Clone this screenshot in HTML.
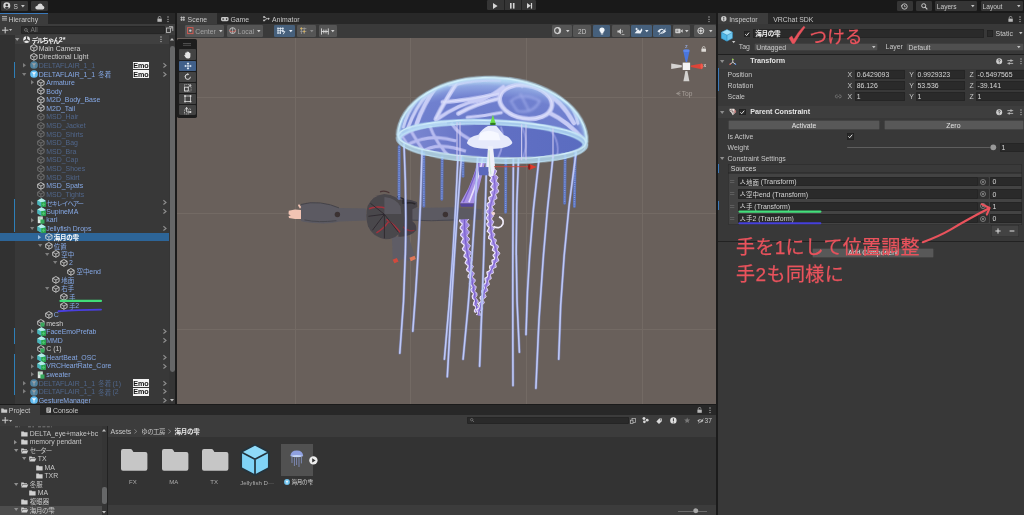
<!DOCTYPE html>
<html><head><meta charset="utf-8"><title>Unity</title>
<style>
html,body{margin:0;padding:0;background:#383838;}
body{width:1024px;height:515px;overflow:hidden;font-family:"Liberation Sans",sans-serif;}
#root{position:relative;width:1024px;height:515px;overflow:hidden;background:#383838;filter:blur(.38px);}
#root div,#root svg{position:absolute;}
#root svg{overflow:visible;}
#vp svg{overflow:hidden;}
.t{white-space:pre;line-height:9px;height:9px;letter-spacing:0;}
.cj{font-family:"Liberation Sans","Noto Sans CJK JP",sans-serif;}
</style></head><body><div id="root"><div style="left:0.00px;top:0.00px;width:1024.00px;height:13.40px;background:#191919;"></div><div style="left:1.20px;top:1.00px;width:26.80px;height:10.00px;background:#363636;border-radius:1.2px"></div><svg style="left:3.40px;top:2.20px;" width="7.60" height="7.60" viewBox="0 0 10 10"><circle cx="5" cy="5" r="4.6" fill="#d4d4d4"/><circle cx="5" cy="3.9" r="1.7" fill="#363636"/><path d="M1.9 8.2Q5 4.6 8.1 8.2Q5 10.4 1.9 8.2Z" fill="#363636"/></svg><div class="t" style="left:13.40px;top:1.60px;color:#c8c8c8;font-size:6.6px;font-weight:400;">S</div><svg style="left:21.40px;top:5.00px;" width="3.80" height="2.60" viewBox="0 0 3.8 2.6"><path d="M0 0H3.8L1.9 2.4Z" fill="#c4c4c4"/></svg><div style="left:31.00px;top:1.00px;width:16.60px;height:10.00px;background:#363636;border-radius:1.2px"></div><svg style="left:34.60px;top:2.80px;" width="9.60" height="6.60" viewBox="0 0 9.6 6.6"><path d="M2.4 6.4Q.2 6.4 .3 4.5Q.5 3 2.2 3Q2.8 .4 5.1 .4Q7.3 .4 7.8 2.7Q9.5 3 9.4 4.7Q9.3 6.4 7.6 6.4Z" fill="#d8d8d8"/></svg><div style="left:487.30px;top:0.00px;width:49.00px;height:10.40px;background:#353535;border-radius:1.2px"></div><div style="left:503.90px;top:0.00px;width:0.70px;height:10.40px;background:#222;"></div><div style="left:520.60px;top:0.00px;width:0.70px;height:10.40px;background:#222;"></div><svg style="left:493.30px;top:3.00px;" width="5.00" height="6.00" viewBox="0 0 5 6"><path d="M0 0L4.6 3L0 6Z" fill="#d6d6d6"/></svg><svg style="left:510.40px;top:3.10px;" width="5.00" height="6.00" viewBox="0 0 5 6"><rect x="0" y="0" width="1.6" height="5.6" fill="#d6d6d6"/><rect x="2.9" y="0" width="1.6" height="5.6" fill="#d6d6d6"/></svg><svg style="left:526.70px;top:3.10px;" width="6.00" height="6.00" viewBox="0 0 6 6"><path d="M0 0L3.8 2.8L0 5.6Z" fill="#d6d6d6"/><rect x="3.9" y="0" width="1.2" height="5.6" fill="#d6d6d6"/></svg><div style="left:896.70px;top:1.00px;width:16.20px;height:9.90px;background:#353535;border-radius:1.2px"></div><svg style="left:901.30px;top:2.50px;" width="7.00" height="7.00" viewBox="0 0 7 7"><circle cx="3.5" cy="3.5" r="2.7" fill="none" stroke="#c8c8c8" stroke-width="0.9"/><path d="M3.5 2V3.7H4.8" stroke="#c8c8c8" stroke-width="0.7" fill="none"/><path d="M0 2.2L1.6 2.6L0.5 3.7Z" fill="#c8c8c8"/></svg><div style="left:916.00px;top:1.00px;width:16.00px;height:9.90px;background:#353535;border-radius:1.2px"></div><svg style="left:920.80px;top:2.60px;" width="7.00" height="7.00" viewBox="0 0 7 7"><circle cx="2.7" cy="2.7" r="2" fill="none" stroke="#c8c8c8" stroke-width="1"/><path d="M4.2 4.2L6.3 6.3" stroke="#c8c8c8" stroke-width="1.2"/></svg><div style="left:935.00px;top:1.00px;width:42.00px;height:9.90px;background:#353535;border-radius:1.2px"></div><div class="t" style="left:936.80px;top:1.50px;color:#c8c8c8;font-size:6.6px;font-weight:400;">Layers</div><svg style="left:971.40px;top:5.00px;" width="3.60" height="2.40" viewBox="0 0 3.6 2.4"><path d="M0 0H3.6L1.8 2.3Z" fill="#c4c4c4"/></svg><div style="left:980.80px;top:1.00px;width:41.80px;height:9.90px;background:#353535;border-radius:1.2px"></div><div class="t" style="left:982.60px;top:1.50px;color:#c8c8c8;font-size:6.6px;font-weight:400;">Layout</div><svg style="left:1016.60px;top:5.00px;" width="3.60" height="2.40" viewBox="0 0 3.6 2.4"><path d="M0 0H3.6L1.8 2.3Z" fill="#c4c4c4"/></svg><div style="left:0.00px;top:13.40px;width:175.40px;height:10.60px;background:#282828;"></div><div style="left:176.60px;top:13.40px;width:539.60px;height:10.60px;background:#282828;"></div><div style="left:717.60px;top:13.40px;width:306.40px;height:10.60px;background:#282828;"></div><div style="left:175.40px;top:13.40px;width:1.20px;height:391.00px;background:#1b1b1b;"></div><div style="left:716.20px;top:13.40px;width:1.40px;height:501.60px;background:#1b1b1b;"></div><div style="left:0.00px;top:13.40px;width:47.60px;height:10.60px;background:#3c3c3c;"></div><div style="left:0.00px;top:13.40px;width:47.60px;height:0.90px;background:#3a79bb;"></div><svg style="left:1.60px;top:16.40px;" width="5.00" height="5.00" viewBox="0 0 5 5"><path d="M0 .6H5M0 2.3H5M0 4H5" stroke="#c8c8c8" stroke-width=".8"/></svg><div class="t" style="left:8.60px;top:14.50px;color:#c8c8c8;font-size:6.9px;font-weight:400;">Hierarchy</div><svg style="left:156.50px;top:15.80px;" width="5.40" height="6.20" viewBox="0 0 5.4 6.2"><rect x=".4" y="2.6" width="4.4" height="3.2" fill="#b8b8b8"/><path d="M1.3 2.6V1.6Q1.3 .5 2.6 .5Q3.9 .5 3.9 1.6" stroke="#b8b8b8" stroke-width=".8" fill="none"/></svg><svg style="left:166.60px;top:15.60px;" width="2.00" height="7.00" viewBox="0 0 2 7"><circle cx="1" cy="1" r=".65" fill="#bbb"/><circle cx="1" cy="3.3" r=".65" fill="#bbb"/><circle cx="1" cy="5.6" r=".65" fill="#bbb"/></svg><div style="left:0.00px;top:24.00px;width:175.40px;height:11.30px;background:#3c3c3c;"></div><svg style="left:1.60px;top:26.60px;" width="6.40" height="6.40" viewBox="0 0 6.4 6.4"><path d="M3.2 0V6.4M0 3.2H6.4" stroke="#d0d0d0" stroke-width="1"/></svg><svg style="left:8.80px;top:28.60px;" width="3.20" height="2.40" viewBox="0 0 3.2 2.4"><path d="M0 0H3.2L1.6 2.1Z" fill="#c0c0c0"/></svg><div style="left:20.50px;top:25.60px;width:144.50px;height:8.20px;background:#2a2a2a;border-radius:1.4px;box-shadow:inset 0 0 0 .5px #212121"></div><svg style="left:23.60px;top:27.50px;" width="5.00" height="5.00" viewBox="0 0 5 5"><circle cx="1.9" cy="1.9" r="1.4" fill="none" stroke="#8a8a8a" stroke-width=".7"/><path d="M3 3L4.4 4.4" stroke="#8a8a8a" stroke-width=".8"/></svg><div class="t" style="left:30.40px;top:25.20px;color:#7a7a7a;font-size:6.6px;font-weight:400;">All</div><svg style="left:165.60px;top:26.20px;" width="7.40" height="7.40" viewBox="0 0 7.4 7.4"><rect x=".6" y="2" width="4" height="4.6" fill="none" stroke="#c4c4c4" stroke-width=".8"/><path d="M3 .6H6.8V5" stroke="#c4c4c4" stroke-width=".8" fill="none"/><path d="M4.2 3.2L6.2 1.2M6.2 1.2H4.8M6.2 1.2V2.6" stroke="#c4c4c4" stroke-width=".6" fill="none"/></svg><div style="left:0.00px;top:35.30px;width:14.60px;height:368.60px;background:#313131;"></div><div style="left:14.60px;top:35.30px;width:154.40px;height:8.60px;background:#404040;"></div><div style="left:169.00px;top:35.30px;width:6.40px;height:368.60px;background:#353535;"></div><div style="left:169.60px;top:45.50px;width:5.20px;height:326.00px;background:#666768;border-radius:2.4px"></div><svg style="left:170.30px;top:38.40px;" width="4.00" height="3.00" viewBox="0 0 4 3"><path d="M0 2.6L2 0L4 2.6Z" fill="#c0c0c0"/></svg><svg style="left:170.30px;top:398.60px;" width="4.00" height="3.00" viewBox="0 0 4 3"><path d="M0 0L2 2.6L4 0Z" fill="#c0c0c0"/></svg><svg style="left:15.00px;top:38.17px;" width="4.40" height="3.20" viewBox="0 0 4.4 3.2"><path d="M0 0H4.4L2.2 3Z" fill="#9a9a9a"/></svg><svg style="left:22.80px;top:36.07px;" width="7.20" height="7.20" viewBox="0 0 10 10"><circle cx="5" cy="5" r="4.7" fill="#e8e8e8"/><path d="M5 5L5 .2M5 5L.9 7.4M5 5L9.1 7.4" stroke="#404040" stroke-width="1.7"/><circle cx="5" cy="5" r="1.3" fill="#404040"/></svg><div class="t cj" style="left:31.40px;top:35.53px;color:#f0f0f0;font-size:6.7px;font-weight:700;letter-spacing:-1.2px;">デルちゃん</div><div class="t" style="left:58.87px;top:35.17px;color:#f0f0f0;font-size:7.0px;font-weight:700;">2*</div><svg style="left:160.40px;top:36.40px;" width="2.00" height="7.00" viewBox="0 0 2 7"><circle cx="1" cy="1" r=".65" fill="#c4c4c4"/><circle cx="1" cy="3.3" r=".65" fill="#c4c4c4"/><circle cx="1" cy="5.6" r=".65" fill="#c4c4c4"/></svg><div style="left:0.00px;top:232.86px;width:168.60px;height:8.59px;background:#2d6598;"></div><svg style="left:29.60px;top:44.36px;" width="7.80" height="7.80" viewBox="0 0 10 10"><g fill="none" stroke="#dcdcdc" stroke-width="1.05" stroke-linejoin="round" opacity="1"><path d="M5 .7L9.1 2.9V7.1L5 9.3L.9 7.1V2.9Z"/><path d="M.9 2.9L5 5.1L9.1 2.9M5 5.1V9.3" stroke-width=".95"/></g></svg><div class="t" style="left:38.70px;top:43.76px;color:#d0d0d0;font-size:6.95px;font-weight:400;">Main Camera</div><svg style="left:29.60px;top:52.94px;" width="7.80" height="7.80" viewBox="0 0 10 10"><g fill="none" stroke="#dcdcdc" stroke-width="1.05" stroke-linejoin="round" opacity="1"><path d="M5 .7L9.1 2.9V7.1L5 9.3L.9 7.1V2.9Z"/><path d="M.9 2.9L5 5.1L9.1 2.9M5 5.1V9.3" stroke-width=".95"/></g></svg><div class="t" style="left:38.70px;top:52.34px;color:#d0d0d0;font-size:6.95px;font-weight:400;">Directional Light</div><svg style="left:23.20px;top:63.13px;" width="3.20" height="4.60" viewBox="0 0 3.2 4.6"><path d="M0 0L3 2.3L0 4.6Z" fill="#7e7e7e"/></svg><svg style="left:29.60px;top:61.43px;" width="8.00" height="8.00" viewBox="0 0 10 10"><g opacity="0.55"><circle cx="5" cy="5" r="4.8" fill="#62bdf2"/><path d="M2.3 2.8H7.7L5.6 5.6V8.2H4.4V5.6Z" fill="#eef8ff"/></g></svg><div class="t" style="left:38.70px;top:60.93px;color:#50668a;font-size:6.95px;font-weight:400;">DELTAFLAIR_1_1</div><div style="left:132.60px;top:61.73px;width:16.00px;height:7.50px;background:#f4f4f4;"></div><div class="t" style="left:133.20px;top:61.03px;color:#111;font-size:7.2px;font-weight:700;">Emo</div><svg style="left:162.60px;top:63.03px;" width="3.40" height="4.80" viewBox="0 0 3.4 4.8"><path d="M.4 .3L3 2.4L.4 4.5" fill="none" stroke="#8e8e8e" stroke-width="1.15"/></svg><svg style="left:22.40px;top:72.51px;" width="4.40" height="3.20" viewBox="0 0 4.4 3.2"><path d="M0 0H4.4L2.2 3Z" fill="#7e7e7e"/></svg><svg style="left:29.60px;top:70.01px;" width="8.00" height="8.00" viewBox="0 0 10 10"><g opacity="1"><circle cx="5" cy="5" r="4.8" fill="#62bdf2"/><path d="M2.3 2.8H7.7L5.6 5.6V8.2H4.4V5.6Z" fill="#eef8ff"/></g></svg><div class="t" style="left:38.70px;top:69.51px;color:#86a9e6;font-size:6.95px;font-weight:400;">DELTAFLAIR_1_1 </div><div class="t cj" style="left:98.19px;top:69.82px;color:#86a9e6;font-size:6.45px;font-weight:400;">冬着</div><div style="left:132.60px;top:70.31px;width:16.00px;height:7.50px;background:#f4f4f4;"></div><div class="t" style="left:133.20px;top:69.61px;color:#111;font-size:7.2px;font-weight:700;">Emo</div><svg style="left:162.60px;top:71.61px;" width="3.40" height="4.80" viewBox="0 0 3.4 4.8"><path d="M.4 .3L3 2.4L.4 4.5" fill="none" stroke="#8e8e8e" stroke-width="1.15"/></svg><svg style="left:30.75px;top:80.30px;" width="3.20" height="4.60" viewBox="0 0 3.2 4.6"><path d="M0 0L3 2.3L0 4.6Z" fill="#7e7e7e"/></svg><svg style="left:37.15px;top:78.70px;" width="7.80" height="7.80" viewBox="0 0 10 10"><g fill="none" stroke="#dcdcdc" stroke-width="1.05" stroke-linejoin="round" opacity="1"><path d="M5 .7L9.1 2.9V7.1L5 9.3L.9 7.1V2.9Z"/><path d="M.9 2.9L5 5.1L9.1 2.9M5 5.1V9.3" stroke-width=".95"/></g></svg><div class="t" style="left:46.25px;top:78.10px;color:#86a9e6;font-size:6.95px;font-weight:400;">Armature</div><svg style="left:37.15px;top:87.29px;" width="7.80" height="7.80" viewBox="0 0 10 10"><g fill="none" stroke="#dcdcdc" stroke-width="1.05" stroke-linejoin="round" opacity="1"><path d="M5 .7L9.1 2.9V7.1L5 9.3L.9 7.1V2.9Z"/><path d="M.9 2.9L5 5.1L9.1 2.9M5 5.1V9.3" stroke-width=".95"/></g></svg><div class="t" style="left:46.25px;top:86.69px;color:#86a9e6;font-size:6.95px;font-weight:400;">Body</div><svg style="left:37.15px;top:95.87px;" width="7.80" height="7.80" viewBox="0 0 10 10"><g fill="none" stroke="#dcdcdc" stroke-width="1.05" stroke-linejoin="round" opacity="1"><path d="M5 .7L9.1 2.9V7.1L5 9.3L.9 7.1V2.9Z"/><path d="M.9 2.9L5 5.1L9.1 2.9M5 5.1V9.3" stroke-width=".95"/></g></svg><div class="t" style="left:46.25px;top:95.27px;color:#86a9e6;font-size:6.95px;font-weight:400;">M2D_Body_Base</div><svg style="left:37.15px;top:104.46px;" width="7.80" height="7.80" viewBox="0 0 10 10"><g fill="none" stroke="#dcdcdc" stroke-width="1.05" stroke-linejoin="round" opacity="1"><path d="M5 .7L9.1 2.9V7.1L5 9.3L.9 7.1V2.9Z"/><path d="M.9 2.9L5 5.1L9.1 2.9M5 5.1V9.3" stroke-width=".95"/></g></svg><div class="t" style="left:46.25px;top:103.86px;color:#86a9e6;font-size:6.95px;font-weight:400;">M2D_Tail</div><svg style="left:37.15px;top:113.04px;" width="7.80" height="7.80" viewBox="0 0 10 10"><g fill="none" stroke="#8a8a8a" stroke-width="1.05" stroke-linejoin="round" opacity="0.8"><path d="M5 .7L9.1 2.9V7.1L5 9.3L.9 7.1V2.9Z"/><path d="M.9 2.9L5 5.1L9.1 2.9M5 5.1V9.3" stroke-width=".95"/></g></svg><div class="t" style="left:46.25px;top:112.44px;color:#50668a;font-size:6.95px;font-weight:400;">MSD_Hair</div><svg style="left:37.15px;top:121.63px;" width="7.80" height="7.80" viewBox="0 0 10 10"><g fill="none" stroke="#8a8a8a" stroke-width="1.05" stroke-linejoin="round" opacity="0.8"><path d="M5 .7L9.1 2.9V7.1L5 9.3L.9 7.1V2.9Z"/><path d="M.9 2.9L5 5.1L9.1 2.9M5 5.1V9.3" stroke-width=".95"/></g></svg><div class="t" style="left:46.25px;top:121.03px;color:#50668a;font-size:6.95px;font-weight:400;">MSD_Jacket</div><svg style="left:37.15px;top:130.22px;" width="7.80" height="7.80" viewBox="0 0 10 10"><g fill="none" stroke="#8a8a8a" stroke-width="1.05" stroke-linejoin="round" opacity="0.8"><path d="M5 .7L9.1 2.9V7.1L5 9.3L.9 7.1V2.9Z"/><path d="M.9 2.9L5 5.1L9.1 2.9M5 5.1V9.3" stroke-width=".95"/></g></svg><div class="t" style="left:46.25px;top:129.62px;color:#50668a;font-size:6.95px;font-weight:400;">MSD_Shirts</div><svg style="left:37.15px;top:138.80px;" width="7.80" height="7.80" viewBox="0 0 10 10"><g fill="none" stroke="#8a8a8a" stroke-width="1.05" stroke-linejoin="round" opacity="0.8"><path d="M5 .7L9.1 2.9V7.1L5 9.3L.9 7.1V2.9Z"/><path d="M.9 2.9L5 5.1L9.1 2.9M5 5.1V9.3" stroke-width=".95"/></g></svg><div class="t" style="left:46.25px;top:138.20px;color:#50668a;font-size:6.95px;font-weight:400;">MSD_Bag</div><svg style="left:37.15px;top:147.39px;" width="7.80" height="7.80" viewBox="0 0 10 10"><g fill="none" stroke="#8a8a8a" stroke-width="1.05" stroke-linejoin="round" opacity="0.8"><path d="M5 .7L9.1 2.9V7.1L5 9.3L.9 7.1V2.9Z"/><path d="M.9 2.9L5 5.1L9.1 2.9M5 5.1V9.3" stroke-width=".95"/></g></svg><div class="t" style="left:46.25px;top:146.79px;color:#50668a;font-size:6.95px;font-weight:400;">MSD_Bra</div><svg style="left:37.15px;top:155.97px;" width="7.80" height="7.80" viewBox="0 0 10 10"><g fill="none" stroke="#8a8a8a" stroke-width="1.05" stroke-linejoin="round" opacity="0.8"><path d="M5 .7L9.1 2.9V7.1L5 9.3L.9 7.1V2.9Z"/><path d="M.9 2.9L5 5.1L9.1 2.9M5 5.1V9.3" stroke-width=".95"/></g></svg><div class="t" style="left:46.25px;top:155.37px;color:#50668a;font-size:6.95px;font-weight:400;">MSD_Cap</div><svg style="left:37.15px;top:164.56px;" width="7.80" height="7.80" viewBox="0 0 10 10"><g fill="none" stroke="#8a8a8a" stroke-width="1.05" stroke-linejoin="round" opacity="0.8"><path d="M5 .7L9.1 2.9V7.1L5 9.3L.9 7.1V2.9Z"/><path d="M.9 2.9L5 5.1L9.1 2.9M5 5.1V9.3" stroke-width=".95"/></g></svg><div class="t" style="left:46.25px;top:163.96px;color:#50668a;font-size:6.95px;font-weight:400;">MSD_Shoes</div><svg style="left:37.15px;top:173.15px;" width="7.80" height="7.80" viewBox="0 0 10 10"><g fill="none" stroke="#8a8a8a" stroke-width="1.05" stroke-linejoin="round" opacity="0.8"><path d="M5 .7L9.1 2.9V7.1L5 9.3L.9 7.1V2.9Z"/><path d="M.9 2.9L5 5.1L9.1 2.9M5 5.1V9.3" stroke-width=".95"/></g></svg><div class="t" style="left:46.25px;top:172.55px;color:#50668a;font-size:6.95px;font-weight:400;">MSD_Skirt</div><svg style="left:37.15px;top:181.73px;" width="7.80" height="7.80" viewBox="0 0 10 10"><g fill="none" stroke="#dcdcdc" stroke-width="1.05" stroke-linejoin="round" opacity="1"><path d="M5 .7L9.1 2.9V7.1L5 9.3L.9 7.1V2.9Z"/><path d="M.9 2.9L5 5.1L9.1 2.9M5 5.1V9.3" stroke-width=".95"/></g></svg><div class="t" style="left:46.25px;top:181.13px;color:#86a9e6;font-size:6.95px;font-weight:400;">MSD_Spats</div><svg style="left:37.15px;top:190.32px;" width="7.80" height="7.80" viewBox="0 0 10 10"><g fill="none" stroke="#8a8a8a" stroke-width="1.05" stroke-linejoin="round" opacity="0.8"><path d="M5 .7L9.1 2.9V7.1L5 9.3L.9 7.1V2.9Z"/><path d="M.9 2.9L5 5.1L9.1 2.9M5 5.1V9.3" stroke-width=".95"/></g></svg><div class="t" style="left:46.25px;top:189.72px;color:#50668a;font-size:6.95px;font-weight:400;">MSD_Tights</div><svg style="left:30.75px;top:200.50px;" width="3.20" height="4.60" viewBox="0 0 3.2 4.6"><path d="M0 0L3 2.3L0 4.6Z" fill="#7e7e7e"/></svg><svg style="left:36.55px;top:198.30px;" width="9.00" height="9.00" viewBox="0 0 10 10"><g opacity="1"><path d="M5 .4L9.5 2.8V7.2L5 9.6L.5 7.2V2.8Z" fill="#58c4c0"/><path d="M5 .4L9.5 2.8L5 5.2L.5 2.8Z" fill="#b4ece6"/><path d="M.5 2.8L5 5.2V9.6L.5 7.2Z" fill="#49b4bc"/><path d="M4.7 4.4H9.9V9.9H4.7Z" fill="#2ba650"/><path d="M7.3 5.4V8.9M5.6 7.15H9" stroke="#57c878" stroke-width=".9"/></g></svg><div class="t cj" style="left:46.25px;top:198.61px;color:#86a9e6;font-size:6.45px;font-weight:400;letter-spacing:-1.15px;">セキレイヘアー</div><svg style="left:162.60px;top:200.40px;" width="3.40" height="4.80" viewBox="0 0 3.4 4.8"><path d="M.4 .3L3 2.4L.4 4.5" fill="none" stroke="#8e8e8e" stroke-width="1.15"/></svg><svg style="left:30.75px;top:209.09px;" width="3.20" height="4.60" viewBox="0 0 3.2 4.6"><path d="M0 0L3 2.3L0 4.6Z" fill="#7e7e7e"/></svg><svg style="left:36.55px;top:206.89px;" width="9.00" height="9.00" viewBox="0 0 10 10"><g opacity="1"><path d="M5 .4L9.5 2.8V7.2L5 9.6L.5 7.2V2.8Z" fill="#58c4c0"/><path d="M5 .4L9.5 2.8L5 5.2L.5 2.8Z" fill="#b4ece6"/><path d="M.5 2.8L5 5.2V9.6L.5 7.2Z" fill="#49b4bc"/><path d="M4.7 4.4H9.9V9.9H4.7Z" fill="#2ba650"/><path d="M7.3 5.4V8.9M5.6 7.15H9" stroke="#57c878" stroke-width=".9"/></g></svg><div class="t" style="left:46.25px;top:206.89px;color:#86a9e6;font-size:6.95px;font-weight:400;">SupineMA</div><svg style="left:162.60px;top:208.99px;" width="3.40" height="4.80" viewBox="0 0 3.4 4.8"><path d="M.4 .3L3 2.4L.4 4.5" fill="none" stroke="#8e8e8e" stroke-width="1.15"/></svg><svg style="left:30.75px;top:217.68px;" width="3.20" height="4.60" viewBox="0 0 3.2 4.6"><path d="M0 0L3 2.3L0 4.6Z" fill="#7e7e7e"/></svg><svg style="left:37.15px;top:216.08px;" width="7.80" height="7.80" viewBox="0 0 10 10"><rect x="1" y=".6" width="6.4" height="8.6" fill="#dfe9e4"/><path d="M4.4 4.4H9.6V9.8H4.4Z" fill="#36a95c"/><path d="M2 2.4H6M2 4H4" stroke="#6b8" stroke-width=".8"/></svg><div class="t" style="left:46.25px;top:215.48px;color:#86a9e6;font-size:6.95px;font-weight:400;">kari</div><svg style="left:29.95px;top:227.06px;" width="4.40" height="3.20" viewBox="0 0 4.4 3.2"><path d="M0 0H4.4L2.2 3Z" fill="#7e7e7e"/></svg><svg style="left:36.55px;top:224.06px;" width="9.00" height="9.00" viewBox="0 0 10 10"><g opacity="1"><path d="M5 .4L9.5 2.8V7.2L5 9.6L.5 7.2V2.8Z" fill="#58c4c0"/><path d="M5 .4L9.5 2.8L5 5.2L.5 2.8Z" fill="#b4ece6"/><path d="M.5 2.8L5 5.2V9.6L.5 7.2Z" fill="#49b4bc"/><path d="M4.7 4.4H9.9V9.9H4.7Z" fill="#2ba650"/><path d="M7.3 5.4V8.9M5.6 7.15H9" stroke="#57c878" stroke-width=".9"/></g></svg><div class="t" style="left:46.25px;top:224.06px;color:#86a9e6;font-size:6.95px;font-weight:400;">Jellyfish Drops</div><svg style="left:162.60px;top:226.16px;" width="3.40" height="4.80" viewBox="0 0 3.4 4.8"><path d="M.4 .3L3 2.4L.4 4.5" fill="none" stroke="#8e8e8e" stroke-width="1.15"/></svg><svg style="left:38.30px;top:234.85px;" width="3.20" height="4.60" viewBox="0 0 3.2 4.6"><path d="M0 0L3 2.3L0 4.6Z" fill="#9fc0e0"/></svg><svg style="left:44.70px;top:233.25px;" width="7.80" height="7.80" viewBox="0 0 10 10"><g fill="none" stroke="#dcdcdc" stroke-width="1.05" stroke-linejoin="round" opacity="1"><path d="M5 .7L9.1 2.9V7.1L5 9.3L.9 7.1V2.9Z"/><path d="M.9 2.9L5 5.1L9.1 2.9M5 5.1V9.3" stroke-width=".95"/></g></svg><div class="t cj" style="left:53.80px;top:233.00px;color:#ffffff;font-size:6.5px;font-weight:700;letter-spacing:-0.3px;">海月の雫</div><svg style="left:37.50px;top:244.23px;" width="4.40" height="3.20" viewBox="0 0 4.4 3.2"><path d="M0 0H4.4L2.2 3Z" fill="#7e7e7e"/></svg><svg style="left:44.70px;top:241.83px;" width="7.80" height="7.80" viewBox="0 0 10 10"><g fill="none" stroke="#dcdcdc" stroke-width="1.05" stroke-linejoin="round" opacity="1"><path d="M5 .7L9.1 2.9V7.1L5 9.3L.9 7.1V2.9Z"/><path d="M.9 2.9L5 5.1L9.1 2.9M5 5.1V9.3" stroke-width=".95"/></g></svg><div class="t cj" style="left:53.80px;top:241.54px;color:#86a9e6;font-size:6.45px;font-weight:400;">位置</div><svg style="left:45.05px;top:252.82px;" width="4.40" height="3.20" viewBox="0 0 4.4 3.2"><path d="M0 0H4.4L2.2 3Z" fill="#7e7e7e"/></svg><svg style="left:52.25px;top:250.42px;" width="7.80" height="7.80" viewBox="0 0 10 10"><g fill="none" stroke="#dcdcdc" stroke-width="1.05" stroke-linejoin="round" opacity="1"><path d="M5 .7L9.1 2.9V7.1L5 9.3L.9 7.1V2.9Z"/><path d="M.9 2.9L5 5.1L9.1 2.9M5 5.1V9.3" stroke-width=".95"/></g></svg><div class="t cj" style="left:61.35px;top:250.13px;color:#86a9e6;font-size:6.45px;font-weight:400;">空中</div><svg style="left:52.60px;top:261.41px;" width="4.40" height="3.20" viewBox="0 0 4.4 3.2"><path d="M0 0H4.4L2.2 3Z" fill="#7e7e7e"/></svg><svg style="left:59.80px;top:259.01px;" width="7.80" height="7.80" viewBox="0 0 10 10"><g fill="none" stroke="#dcdcdc" stroke-width="1.05" stroke-linejoin="round" opacity="1"><path d="M5 .7L9.1 2.9V7.1L5 9.3L.9 7.1V2.9Z"/><path d="M.9 2.9L5 5.1L9.1 2.9M5 5.1V9.3" stroke-width=".95"/></g></svg><div class="t" style="left:68.90px;top:258.41px;color:#86a9e6;font-size:6.95px;font-weight:400;">2</div><svg style="left:67.35px;top:267.59px;" width="7.80" height="7.80" viewBox="0 0 10 10"><g fill="none" stroke="#dcdcdc" stroke-width="1.05" stroke-linejoin="round" opacity="1"><path d="M5 .7L9.1 2.9V7.1L5 9.3L.9 7.1V2.9Z"/><path d="M.9 2.9L5 5.1L9.1 2.9M5 5.1V9.3" stroke-width=".95"/></g></svg><div class="t cj" style="left:76.45px;top:267.30px;color:#86a9e6;font-size:6.45px;font-weight:400;">空中</div><div class="t" style="left:89.35px;top:266.99px;color:#86a9e6;font-size:6.95px;font-weight:400;">end</div><svg style="left:52.25px;top:276.18px;" width="7.80" height="7.80" viewBox="0 0 10 10"><g fill="none" stroke="#dcdcdc" stroke-width="1.05" stroke-linejoin="round" opacity="1"><path d="M5 .7L9.1 2.9V7.1L5 9.3L.9 7.1V2.9Z"/><path d="M.9 2.9L5 5.1L9.1 2.9M5 5.1V9.3" stroke-width=".95"/></g></svg><div class="t cj" style="left:61.35px;top:275.89px;color:#86a9e6;font-size:6.45px;font-weight:400;">地面</div><svg style="left:45.05px;top:287.16px;" width="4.40" height="3.20" viewBox="0 0 4.4 3.2"><path d="M0 0H4.4L2.2 3Z" fill="#7e7e7e"/></svg><svg style="left:52.25px;top:284.76px;" width="7.80" height="7.80" viewBox="0 0 10 10"><g fill="none" stroke="#dcdcdc" stroke-width="1.05" stroke-linejoin="round" opacity="1"><path d="M5 .7L9.1 2.9V7.1L5 9.3L.9 7.1V2.9Z"/><path d="M.9 2.9L5 5.1L9.1 2.9M5 5.1V9.3" stroke-width=".95"/></g></svg><div class="t cj" style="left:61.35px;top:284.47px;color:#86a9e6;font-size:6.45px;font-weight:400;">右手</div><svg style="left:59.80px;top:293.35px;" width="7.80" height="7.80" viewBox="0 0 10 10"><g fill="none" stroke="#dcdcdc" stroke-width="1.05" stroke-linejoin="round" opacity="1"><path d="M5 .7L9.1 2.9V7.1L5 9.3L.9 7.1V2.9Z"/><path d="M.9 2.9L5 5.1L9.1 2.9M5 5.1V9.3" stroke-width=".95"/></g></svg><div class="t cj" style="left:68.90px;top:293.06px;color:#86a9e6;font-size:6.45px;font-weight:400;">手</div><svg style="left:59.80px;top:301.94px;" width="7.80" height="7.80" viewBox="0 0 10 10"><g fill="none" stroke="#dcdcdc" stroke-width="1.05" stroke-linejoin="round" opacity="1"><path d="M5 .7L9.1 2.9V7.1L5 9.3L.9 7.1V2.9Z"/><path d="M.9 2.9L5 5.1L9.1 2.9M5 5.1V9.3" stroke-width=".95"/></g></svg><div class="t cj" style="left:68.90px;top:301.64px;color:#86a9e6;font-size:6.45px;font-weight:400;">手</div><div class="t" style="left:75.35px;top:301.34px;color:#86a9e6;font-size:6.95px;font-weight:400;">2</div><svg style="left:44.70px;top:310.52px;" width="7.80" height="7.80" viewBox="0 0 10 10"><g fill="none" stroke="#dcdcdc" stroke-width="1.05" stroke-linejoin="round" opacity="1"><path d="M5 .7L9.1 2.9V7.1L5 9.3L.9 7.1V2.9Z"/><path d="M.9 2.9L5 5.1L9.1 2.9M5 5.1V9.3" stroke-width=".95"/></g></svg><div class="t" style="left:53.80px;top:309.92px;color:#86a9e6;font-size:6.95px;font-weight:400;">C</div><svg style="left:37.15px;top:319.11px;" width="7.80" height="7.80" viewBox="0 0 10 10"><g fill="none" stroke="#d6d6d6" stroke-width="1.05" stroke-linejoin="round"><path d="M5 .7L9.1 2.9V7.1L5 9.3L.9 7.1V2.9Z"/><path d="M.9 2.9L5 5.1L9.1 2.9M5 5.1V9.3" stroke-width=".95"/></g><path d="M4.6 4.6H9.6V9.8H4.6Z" fill="#36a95c"/></svg><div class="t" style="left:46.25px;top:318.51px;color:#d0d0d0;font-size:6.95px;font-weight:400;">mesh</div><svg style="left:30.75px;top:329.29px;" width="3.20" height="4.60" viewBox="0 0 3.2 4.6"><path d="M0 0L3 2.3L0 4.6Z" fill="#7e7e7e"/></svg><svg style="left:36.55px;top:327.09px;" width="9.00" height="9.00" viewBox="0 0 10 10"><g opacity="1"><path d="M5 .4L9.5 2.8V7.2L5 9.6L.5 7.2V2.8Z" fill="#58c4c0"/><path d="M5 .4L9.5 2.8L5 5.2L.5 2.8Z" fill="#b4ece6"/><path d="M.5 2.8L5 5.2V9.6L.5 7.2Z" fill="#49b4bc"/><path d="M4.7 4.4H9.9V9.9H4.7Z" fill="#2ba650"/><path d="M7.3 5.4V8.9M5.6 7.15H9" stroke="#57c878" stroke-width=".9"/></g></svg><div class="t" style="left:46.25px;top:327.09px;color:#86a9e6;font-size:6.95px;font-weight:400;">FaceEmoPrefab</div><svg style="left:162.60px;top:329.19px;" width="3.40" height="4.80" viewBox="0 0 3.4 4.8"><path d="M.4 .3L3 2.4L.4 4.5" fill="none" stroke="#8e8e8e" stroke-width="1.15"/></svg><svg style="left:36.55px;top:335.68px;" width="9.00" height="9.00" viewBox="0 0 10 10"><g opacity="1"><path d="M5 .4L9.5 2.8V7.2L5 9.6L.5 7.2V2.8Z" fill="#58c4c0"/><path d="M5 .4L9.5 2.8L5 5.2L.5 2.8Z" fill="#b4ece6"/><path d="M.5 2.8L5 5.2V9.6L.5 7.2Z" fill="#49b4bc"/><path d="M4.7 4.4H9.9V9.9H4.7Z" fill="#2ba650"/><path d="M7.3 5.4V8.9M5.6 7.15H9" stroke="#57c878" stroke-width=".9"/></g></svg><div class="t" style="left:46.25px;top:335.68px;color:#86a9e6;font-size:6.95px;font-weight:400;">MMD</div><svg style="left:162.60px;top:337.78px;" width="3.40" height="4.80" viewBox="0 0 3.4 4.8"><path d="M.4 .3L3 2.4L.4 4.5" fill="none" stroke="#8e8e8e" stroke-width="1.15"/></svg><svg style="left:37.15px;top:344.87px;" width="7.80" height="7.80" viewBox="0 0 10 10"><g fill="none" stroke="#d6d6d6" stroke-width="1.05" stroke-linejoin="round"><path d="M5 .7L9.1 2.9V7.1L5 9.3L.9 7.1V2.9Z"/><path d="M.9 2.9L5 5.1L9.1 2.9M5 5.1V9.3" stroke-width=".95"/></g><path d="M4.6 4.6H9.6V9.8H4.6Z" fill="#36a95c"/></svg><div class="t" style="left:46.25px;top:344.27px;color:#d0d0d0;font-size:6.95px;font-weight:400;">C (1)</div><svg style="left:30.75px;top:355.05px;" width="3.20" height="4.60" viewBox="0 0 3.2 4.6"><path d="M0 0L3 2.3L0 4.6Z" fill="#7e7e7e"/></svg><svg style="left:36.55px;top:352.85px;" width="9.00" height="9.00" viewBox="0 0 10 10"><g opacity="1"><path d="M5 .4L9.5 2.8V7.2L5 9.6L.5 7.2V2.8Z" fill="#58c4c0"/><path d="M5 .4L9.5 2.8L5 5.2L.5 2.8Z" fill="#b4ece6"/><path d="M.5 2.8L5 5.2V9.6L.5 7.2Z" fill="#49b4bc"/><path d="M4.7 4.4H9.9V9.9H4.7Z" fill="#2ba650"/><path d="M7.3 5.4V8.9M5.6 7.15H9" stroke="#57c878" stroke-width=".9"/></g></svg><div class="t" style="left:46.25px;top:352.85px;color:#86a9e6;font-size:6.95px;font-weight:400;">HeartBeat_OSC</div><svg style="left:162.60px;top:354.95px;" width="3.40" height="4.80" viewBox="0 0 3.4 4.8"><path d="M.4 .3L3 2.4L.4 4.5" fill="none" stroke="#8e8e8e" stroke-width="1.15"/></svg><svg style="left:30.75px;top:363.64px;" width="3.20" height="4.60" viewBox="0 0 3.2 4.6"><path d="M0 0L3 2.3L0 4.6Z" fill="#7e7e7e"/></svg><svg style="left:36.55px;top:361.44px;" width="9.00" height="9.00" viewBox="0 0 10 10"><g opacity="1"><path d="M5 .4L9.5 2.8V7.2L5 9.6L.5 7.2V2.8Z" fill="#58c4c0"/><path d="M5 .4L9.5 2.8L5 5.2L.5 2.8Z" fill="#b4ece6"/><path d="M.5 2.8L5 5.2V9.6L.5 7.2Z" fill="#49b4bc"/><path d="M4.7 4.4H9.9V9.9H4.7Z" fill="#2ba650"/><path d="M7.3 5.4V8.9M5.6 7.15H9" stroke="#57c878" stroke-width=".9"/></g></svg><div class="t" style="left:46.25px;top:361.44px;color:#86a9e6;font-size:6.95px;font-weight:400;">VRCHeartRate_Core</div><svg style="left:162.60px;top:363.54px;" width="3.40" height="4.80" viewBox="0 0 3.4 4.8"><path d="M.4 .3L3 2.4L.4 4.5" fill="none" stroke="#8e8e8e" stroke-width="1.15"/></svg><svg style="left:30.75px;top:372.22px;" width="3.20" height="4.60" viewBox="0 0 3.2 4.6"><path d="M0 0L3 2.3L0 4.6Z" fill="#7e7e7e"/></svg><svg style="left:37.15px;top:370.62px;" width="7.80" height="7.80" viewBox="0 0 10 10"><rect x="1" y=".6" width="6.4" height="8.6" fill="#dfe9e4"/><path d="M4.4 4.4H9.6V9.8H4.4Z" fill="#36a95c"/><path d="M2 2.4H6M2 4H4" stroke="#6b8" stroke-width=".8"/></svg><div class="t" style="left:46.25px;top:370.02px;color:#86a9e6;font-size:6.95px;font-weight:400;">sweater</div><svg style="left:23.20px;top:380.81px;" width="3.20" height="4.60" viewBox="0 0 3.2 4.6"><path d="M0 0L3 2.3L0 4.6Z" fill="#7e7e7e"/></svg><svg style="left:29.60px;top:379.11px;" width="8.00" height="8.00" viewBox="0 0 10 10"><g opacity="0.55"><circle cx="5" cy="5" r="4.8" fill="#62bdf2"/><path d="M2.3 2.8H7.7L5.6 5.6V8.2H4.4V5.6Z" fill="#eef8ff"/></g></svg><div class="t" style="left:38.70px;top:378.61px;color:#50668a;font-size:6.95px;font-weight:400;">DELTAFLAIR_1_1 </div><div class="t cj" style="left:98.19px;top:378.92px;color:#50668a;font-size:6.45px;font-weight:400;">冬着</div><div class="t" style="left:112.53px;top:378.61px;color:#50668a;font-size:6.95px;font-weight:400;">(1)</div><div style="left:132.60px;top:379.41px;width:16.00px;height:7.50px;background:#f4f4f4;"></div><div class="t" style="left:133.20px;top:378.71px;color:#111;font-size:7.2px;font-weight:700;">Emo</div><svg style="left:162.60px;top:380.71px;" width="3.40" height="4.80" viewBox="0 0 3.4 4.8"><path d="M.4 .3L3 2.4L.4 4.5" fill="none" stroke="#8e8e8e" stroke-width="1.15"/></svg><svg style="left:23.20px;top:389.40px;" width="3.20" height="4.60" viewBox="0 0 3.2 4.6"><path d="M0 0L3 2.3L0 4.6Z" fill="#7e7e7e"/></svg><svg style="left:29.60px;top:387.70px;" width="8.00" height="8.00" viewBox="0 0 10 10"><g opacity="0.55"><circle cx="5" cy="5" r="4.8" fill="#62bdf2"/><path d="M2.3 2.8H7.7L5.6 5.6V8.2H4.4V5.6Z" fill="#eef8ff"/></g></svg><div class="t" style="left:38.70px;top:387.20px;color:#50668a;font-size:6.95px;font-weight:400;">DELTAFLAIR_1_1 </div><div class="t cj" style="left:98.19px;top:387.50px;color:#50668a;font-size:6.45px;font-weight:400;">冬着</div><div class="t" style="left:112.53px;top:387.20px;color:#50668a;font-size:6.95px;font-weight:400;">(2</div><div style="left:132.60px;top:388.00px;width:16.00px;height:7.50px;background:#f4f4f4;"></div><div class="t" style="left:133.20px;top:387.30px;color:#111;font-size:7.2px;font-weight:700;">Emo</div><svg style="left:162.60px;top:389.30px;" width="3.40" height="4.80" viewBox="0 0 3.4 4.8"><path d="M.4 .3L3 2.4L.4 4.5" fill="none" stroke="#8e8e8e" stroke-width="1.15"/></svg><svg style="left:29.60px;top:396.28px;" width="8.00" height="8.00" viewBox="0 0 10 10"><g opacity="1"><circle cx="5" cy="5" r="4.8" fill="#62bdf2"/><path d="M2.3 2.8H7.7L5.6 5.6V8.2H4.4V5.6Z" fill="#eef8ff"/></g></svg><div class="t" style="left:38.70px;top:395.78px;color:#86a9e6;font-size:6.95px;font-weight:400;">GestureManager</div><svg style="left:162.60px;top:397.88px;" width="3.40" height="4.80" viewBox="0 0 3.4 4.8"><path d="M.4 .3L3 2.4L.4 4.5" fill="none" stroke="#8e8e8e" stroke-width="1.15"/></svg><svg style="left:58.00px;top:297.00px;" width="46.00" height="16.00" viewBox="0 0 46 16"><path d="M2.4 3.9H43" stroke="#41dd78" stroke-width="2.1" stroke-linecap="round"/><path d="M.6 14.3Q20 12.6 43 12.6" stroke="#4a3fe0" stroke-width="1.9" stroke-linecap="round" fill="none"/></svg><div style="left:13.70px;top:61.63px;width:1.00px;height:16.17px;background:#2e7fb8;"></div><div style="left:13.70px;top:199.01px;width:1.00px;height:33.34px;background:#2e7fb8;"></div><div style="left:13.70px;top:327.80px;width:1.00px;height:16.17px;background:#2e7fb8;"></div><div style="left:13.70px;top:353.56px;width:1.00px;height:41.93px;background:#2e7fb8;"></div><div style="left:0.00px;top:403.90px;width:716.20px;height:0.90px;background:#1b1b1b;"></div><div style="left:176.60px;top:13.40px;width:40.00px;height:10.60px;background:#3c3c3c;"></div><svg style="left:180.20px;top:16.20px;" width="5.40" height="5.40" viewBox="0 0 5.4 5.4"><path d="M.4 1.6H5M.4 3.8H5M1.6 .4V5M3.8 .4V5" stroke="#c8c8c8" stroke-width=".8"/></svg><div class="t" style="left:187.60px;top:14.50px;color:#c8c8c8;font-size:6.9px;font-weight:400;">Scene</div><svg style="left:220.60px;top:16.90px;" width="7.60" height="4.20" viewBox="0 0 7.6 4.2"><rect x="0" y="0" width="7.6" height="4.2" rx="1.4" fill="#c8c8c8"/><circle cx="5.6" cy="2.1" r=".8" fill="#282828"/><path d="M1.2 2.1H3.2M2.2 1.1V3.1" stroke="#282828" stroke-width=".6"/></svg><div class="t" style="left:230.40px;top:14.50px;color:#c8c8c8;font-size:6.9px;font-weight:400;">Game</div><svg style="left:263.40px;top:16.40px;" width="7.00" height="5.40" viewBox="0 0 7 5.4"><circle cx="1" cy="1" r=".9" fill="#c8c8c8"/><circle cx="1" cy="4.4" r=".9" fill="#c8c8c8"/><path d="M1 1Q3 1 3.4 2.7H6.2M1 4.4Q3 4.4 3.4 2.7" stroke="#c8c8c8" stroke-width=".8" fill="none"/><path d="M5 1.4L6.8 2.7L5 4Z" fill="#c8c8c8"/></svg><div class="t" style="left:272.00px;top:14.50px;color:#c8c8c8;font-size:6.9px;font-weight:400;">Animator</div><svg style="left:708.20px;top:15.60px;" width="2.00" height="7.00" viewBox="0 0 2 7"><circle cx="1" cy="1" r=".65" fill="#bbb"/><circle cx="1" cy="3.3" r=".65" fill="#bbb"/><circle cx="1" cy="5.6" r=".65" fill="#bbb"/></svg><div style="left:176.60px;top:24.00px;width:539.60px;height:13.70px;background:#3a3a3a;"></div><div style="left:185.00px;top:25.40px;width:39.40px;height:11.20px;background:#555555;border-radius:1.3px"></div><svg style="left:187.20px;top:27.40px;" width="7.40" height="7.40" viewBox="0 0 7.4 7.4"><rect x=".6" y=".6" width="5.4" height="6" fill="none" stroke="#d05a52" stroke-width="1"/><circle cx="3.3" cy="3.6" r="1.2" fill="#c8c8c8"/></svg><div class="t" style="left:195.20px;top:26.50px;color:#a4a4a4;font-size:6.9px;font-weight:400;">Center</div><svg style="left:218.80px;top:29.90px;" width="3.60" height="2.40" viewBox="0 0 3.6 2.4"><path d="M0 0H3.6L1.8 2.3Z" fill="#d0d0d0"/></svg><div style="left:227.00px;top:25.40px;width:35.80px;height:11.20px;background:#555555;border-radius:1.3px"></div><svg style="left:229.20px;top:27.40px;" width="7.60" height="7.40" viewBox="0 0 7.6 7.4"><circle cx="3.6" cy="3.6" r="2.9" fill="none" stroke="#c8c8c8" stroke-width=".9"/><path d="M.4 3.6Q3.6 6.4 6.8 3.6" fill="none" stroke="#d05a52" stroke-width=".9"/><path d="M3.6 .7V6.5" stroke="#c8c8c8" stroke-width=".7"/></svg><div class="t" style="left:237.60px;top:26.50px;color:#a4a4a4;font-size:6.9px;font-weight:400;">Local</div><svg style="left:257.20px;top:29.90px;" width="3.60" height="2.40" viewBox="0 0 3.6 2.4"><path d="M0 0H3.6L1.8 2.3Z" fill="#d0d0d0"/></svg><div style="left:273.70px;top:25.40px;width:21.10px;height:11.20px;background:#46607c;border-radius:1.3px"></div><svg style="left:276.60px;top:27.30px;" width="8.00" height="7.40" viewBox="0 0 8 7.4"><path d="M1 .4V7M3.4 .4V7M5.8 .4V4M.2 1.4H6.8M.2 3.7H6.8M.2 6H4" stroke="#e6eef8" stroke-width=".85"/><path d="M5 4.6H7.8L6.2 7.2" stroke="#e6eef8" stroke-width=".9" fill="none"/></svg><svg style="left:288.80px;top:29.90px;" width="3.60" height="2.40" viewBox="0 0 3.6 2.4"><path d="M0 0H3.6L1.8 2.3Z" fill="#e6eef8"/></svg><div style="left:297.40px;top:25.40px;width:18.20px;height:11.20px;background:#555555;border-radius:1.3px"></div><svg style="left:300.20px;top:27.30px;" width="7.40" height="7.40" viewBox="0 0 7.4 7.4"><path d="M1.4 .4V7M4.2 .4V7M.2 1.6H6.4M.2 4.4H6.4" stroke="#9a9a9a" stroke-width=".8"/><circle cx="1.4" cy="1.6" r="1" fill="#d8b35a"/><circle cx="4.2" cy="4.4" r="1" fill="#d8b35a"/></svg><svg style="left:310.00px;top:29.90px;" width="3.60" height="2.40" viewBox="0 0 3.6 2.4"><path d="M0 0H3.6L1.8 2.3Z" fill="#8a8a8a"/></svg><div style="left:318.60px;top:25.40px;width:18.60px;height:11.20px;background:#555555;border-radius:1.3px"></div><svg style="left:321.20px;top:27.60px;" width="8.00" height="7.00" viewBox="0 0 8 7"><path d="M.5 .4V6.6M7.3 .4V6.6M2.8 1.6V5.4M5 1.6V5.4M.5 3.5H7.3" stroke="#d8d8d8" stroke-width=".9"/></svg><svg style="left:331.40px;top:29.90px;" width="3.60" height="2.40" viewBox="0 0 3.6 2.4"><path d="M0 0H3.6L1.8 2.3Z" fill="#d0d0d0"/></svg><div style="left:552.00px;top:25.40px;width:19.60px;height:11.20px;background:#555555;border-radius:1.3px"></div><svg style="left:554.40px;top:27.40px;" width="7.60" height="7.40" viewBox="0 0 7.6 7.4"><circle cx="3.6" cy="3.6" r="3" fill="none" stroke="#d0d0d0" stroke-width="1.1"/><path d="M3.6 .6A3 3 0 0 1 3.6 6.6A4.4 4.4 0 0 0 3.6 .6Z" fill="#d0d0d0"/></svg><svg style="left:565.60px;top:29.90px;" width="3.60" height="2.40" viewBox="0 0 3.6 2.4"><path d="M0 0H3.6L1.8 2.3Z" fill="#d0d0d0"/></svg><div style="left:573.40px;top:25.40px;width:17.60px;height:11.20px;background:#555555;border-radius:1.3px"></div><div class="t" style="left:582.20px;top:26.50px;color:#c8c8c8;font-size:6.4px;font-weight:400;transform:translateX(-50%);">2D</div><div style="left:592.70px;top:25.40px;width:17.60px;height:11.20px;background:#46607c;border-radius:1.3px"></div><svg style="left:598.60px;top:27.20px;" width="6.00" height="8.00" viewBox="0 0 6 8"><path d="M3 .4Q5.6 .4 5.6 2.9Q5.6 4.2 4.4 5V6H1.6V5Q.4 4.2 .4 2.9Q.4 .4 3 .4Z" fill="#f2f6fa"/><rect x="1.8" y="6.4" width="2.4" height="1" fill="#f2f6fa"/></svg><div style="left:612.00px;top:25.40px;width:17.60px;height:11.20px;background:#555555;border-radius:1.3px"></div><svg style="left:616.80px;top:27.60px;" width="8.00" height="7.00" viewBox="0 0 8 7"><path d="M.4 2.4H2L4 .6V6.2L2 4.6H.4Z" fill="#d0d0d0"/><path d="M5 2Q6 3.4 5 4.8" stroke="#d0d0d0" stroke-width=".7" fill="none"/><path d="M4.6 6.6H7.4" stroke="#d0d0d0" stroke-width=".7"/></svg><div style="left:631.00px;top:25.40px;width:20.60px;height:11.20px;background:#46607c;border-radius:1.3px"></div><svg style="left:634.00px;top:27.40px;" width="9.00" height="7.40" viewBox="0 0 9 7.4"><path d="M.6 6.2L4 2.2L6 4L7.6 1.2L8.4 3L6.6 6.6Z" fill="#eaf0f8"/><path d="M2 1.6L2.6 .4L3.2 1.6L4.4 2L3.2 2.5L2.6 3.8L2 2.5L.8 2Z" fill="#eaf0f8"/></svg><svg style="left:645.40px;top:29.90px;" width="3.60" height="2.40" viewBox="0 0 3.6 2.4"><path d="M0 0H3.6L1.8 2.3Z" fill="#e6eef8"/></svg><div style="left:653.40px;top:25.40px;width:17.60px;height:11.20px;background:#46607c;border-radius:1.3px"></div><svg style="left:657.40px;top:27.80px;" width="10.00" height="6.60" viewBox="0 0 10 6.6"><path d="M.4 3.3Q4.8 -1.6 9.2 3.3Q4.8 8.2 .4 3.3Z" fill="#eaf0f8"/><circle cx="4.8" cy="3.3" r="1.5" fill="#46607c"/><path d="M1.4 6.2L8.4 .4" stroke="#46607c" stroke-width="1.1"/><path d="M1.9 6.6L8.9 .8" stroke="#eaf0f8" stroke-width=".7"/></svg><div style="left:672.70px;top:25.40px;width:17.60px;height:11.20px;background:#555555;border-radius:1.3px"></div><svg style="left:675.20px;top:28.20px;" width="8.00" height="6.00" viewBox="0 0 8 6"><rect x=".3" y=".8" width="5.2" height="4.4" rx=".6" fill="#d4d4d4"/><path d="M5.5 3L7.7 1.2V4.8Z" fill="#d4d4d4"/><path d="M1.4 2.2H3.4M1.4 3.6H3.4" stroke="#555" stroke-width=".6"/></svg><svg style="left:684.60px;top:29.90px;" width="3.60" height="2.40" viewBox="0 0 3.6 2.4"><path d="M0 0H3.6L1.8 2.3Z" fill="#d0d0d0"/></svg><div style="left:693.80px;top:25.40px;width:22.00px;height:11.20px;background:#555555;border-radius:1.3px"></div><svg style="left:697.00px;top:27.20px;" width="8.00" height="8.00" viewBox="0 0 8 8"><circle cx="3.8" cy="3.8" r="3" fill="none" stroke="#d4d4d4" stroke-width="1"/><path d="M3.8 .8V6.8M.8 3.8H6.8" stroke="#d4d4d4" stroke-width=".8"/><circle cx="3.8" cy="3.8" r="1.1" fill="#d4d4d4"/></svg><svg style="left:709.40px;top:29.90px;" width="3.60" height="2.40" viewBox="0 0 3.6 2.4"><path d="M0 0H3.6L1.8 2.3Z" fill="#d0d0d0"/></svg><div id="vp" style="left:176.6px;top:37.7px;width:539.60px;height:366.20px;background:#69605b;overflow:hidden"><div style="left:118.30px;top:0;width:.9px;height:367px;background:#736a64"></div><div style="left:233.90px;top:0;width:.9px;height:367px;background:#736a64"></div><div style="left:349.60px;top:0;width:.9px;height:367px;background:#736a64"></div><div style="left:465.20px;top:0;width:.9px;height:367px;background:#736a64"></div><div style="left:0;top:59.50px;width:540px;height:.9px;background:#736a64"></div><div style="left:0;top:175.50px;width:540px;height:.9px;background:#736a64"></div><div style="left:0;top:291.60px;width:540px;height:.9px;background:#736a64"></div><svg style="left:0;top:0" width="539.6" height="366.2" viewBox="176.6 37.7 539.6 366.2"><defs>
<filter id="b04" x="-20%" y="-20%" width="140%" height="140%"><feGaussianBlur stdDeviation=".4"/></filter>
<filter id="b07" x="-20%" y="-20%" width="140%" height="140%"><feGaussianBlur stdDeviation=".7"/></filter>
<filter id="b12" x="-20%" y="-20%" width="140%" height="140%"><feGaussianBlur stdDeviation="1.2"/></filter>
<filter id="b2" x="-20%" y="-20%" width="140%" height="140%"><feGaussianBlur stdDeviation="2"/></filter>
<radialGradient id="domeg" cx="50%" cy="78%" r="75%"><stop offset="0" stop-color="#6a7ac9"/><stop offset=".62" stop-color="#7080cf"/><stop offset=".86" stop-color="#8fa6e2"/><stop offset="1" stop-color="#b6d8f2"/></radialGradient>
<linearGradient id="undg" x1="0" x2="1" y1="0" y2="0"><stop offset="0" stop-color="#7e8ad2"/><stop offset=".45" stop-color="#6270c4"/><stop offset="1" stop-color="#5a6cc0"/></linearGradient>
<linearGradient id="tentg" x1="0" x2="0" y1="0" y2="1"><stop offset="0" stop-color="#c2c8f6"/><stop offset=".7" stop-color="#aab6f2"/><stop offset="1" stop-color="#98a8ee"/></linearGradient><clipPath id="domeclip"><path d="M397.3 138.6A94.5 61.2 0 0 1 586.3 138.6A94.5 18.6 0 0 0 397.3 138.6Z"/></clipPath><clipPath id="undclip"><ellipse cx="491.8" cy="138.6" rx="94.5" ry="18.6"/></clipPath></defs><g filter="url(#b04)"><path d="M300.4 204.2Q309 201.6 320 202.6Q331 204 338.6 207.6L366 208.2V220.2L339 221.2Q330 223.6 318 223Q307 222.6 300.6 220.6Z" fill="#5b5a62"/><path d="M300.4 204.2Q309 201.6 320 202.6Q331 204 338.6 207.6" fill="none" stroke="#3e3c42" stroke-width=".8"/><path d="M304 219.6Q318 222.6 336 220.4" fill="none" stroke="#47464d" stroke-width="1"/><path d="M288.4 210.4L294.6 209.2L300.6 209.6V218.6L294.6 218.8L288.6 217.8L288.2 215.8L290.4 215.2L288.2 214L288.2 212.2Z" fill="#f1c3b3"/><path d="M298.6 203.6L300.8 206.6L299.6 208.4L297.6 205.2Z" fill="#f1c3b3"/><circle cx="337" cy="214.2" r="2.7" fill="#3b3232"/><path d="M402 207.6L443 207.2Q452 206.4 462 208L481.4 208.6V219.4L462 219.8Q450 221.2 440 220.2L402 220.4Z" fill="#5b5a62"/><path d="M404 219.6Q430 221.4 460 219.4" fill="none" stroke="#47464d" stroke-width="1"/><circle cx="445" cy="214.2" r="2.7" fill="#3b3232"/><path d="M391.6 236L408.4 236.6L414.8 257.4L409 260.4L402 258.6L396 262L392.4 260Z" fill="#5e5d66"/><path d="M392.2 259.4L396.4 257.6L398.2 261.2L394 263Z" fill="#d24a3c"/><path d="M409 257.4L414.2 255.4L415.4 258.8L410.4 261Z" fill="#e0785a"/><path d="M398 199.6Q408 197.6 416.6 201.6L417 206.6L412 209V221Q416.6 224 416 230Q410 237 398 236.4Z" fill="#45424a"/><path d="M404 203Q410 201.6 415 203.6" stroke="#2a282c" stroke-width="1.6" fill="none"/><path d="M402 226Q408 232 414 230" stroke="#8a2f38" stroke-width="1.2" fill="none"/><path d="M384 193.6Q397 194.8 402.6 204Q405.8 216 402.4 228.6Q396.8 238.6 385 239Q372 236.6 367.6 226Q364.6 215.6 367.2 205.6Q372 195 384 193.6Z" fill="#4a464b"/><path d="M379.6 191.6Q384 189.6 389 192.4" fill="none" stroke="#4a3436" stroke-width="1.2"/><g fill="none" stroke="#a4323c" stroke-width="1.5"><path d="M368.6 208.4Q376 205 386 208"/><path d="M386 219Q394 224 399.6 232"/><path d="M376 232.6Q383 228.6 388 221.6"/></g><g fill="none" stroke="#2f2b30" stroke-width="1"><path d="M384 214L370 203M384 214L368 216M384 214L372 230M384 214L384 238M384 214L398 232"/></g><path d="M384 196.6Q396 198 400 206L401 213.6L384 213.6Z" fill="#5a5960"/><path d="M396.6 196.4L402.8 198.4L402.6 203.6" fill="none" stroke="#2c2a2e" stroke-width="1.4"/></g><g filter="url(#b04)"><path d="M398.8 146.5L398.6 198.2" stroke="#5c76c6" stroke-width="2.9" stroke-linecap="round" opacity=".9"/><path d="M398.8 146.5L398.6 198.2" stroke="#8ea6ea" stroke-width="1.3" stroke-dasharray=".9 1.25" opacity=".9"/><path d="M423.4 152.6L423.4 206" stroke="#5c76c6" stroke-width="2.9" stroke-linecap="round" opacity=".9"/><path d="M423.4 152.6L423.4 206" stroke="#8ea6ea" stroke-width="1.3" stroke-dasharray=".9 1.25" opacity=".9"/><path d="M441.8 156.6L441.4 199" stroke="#5c76c6" stroke-width="2.9" stroke-linecap="round" opacity=".9"/><path d="M441.8 156.6L441.4 199" stroke="#8ea6ea" stroke-width="1.3" stroke-dasharray=".9 1.25" opacity=".9"/><path d="M505.4 159.6L505.2 212" stroke="#5c76c6" stroke-width="2.9" stroke-linecap="round" opacity=".9"/><path d="M505.4 159.6L505.2 212" stroke="#8ea6ea" stroke-width="1.3" stroke-dasharray=".9 1.25" opacity=".9"/><path d="M564.8 155.4L564.2 203" stroke="#5c76c6" stroke-width="2.9" stroke-linecap="round" opacity=".9"/><path d="M564.8 155.4L564.2 203" stroke="#8ea6ea" stroke-width="1.3" stroke-dasharray=".9 1.25" opacity=".9"/><path d="M574.8 151.6L574.0 206.2" stroke="#5c76c6" stroke-width="2.9" stroke-linecap="round" opacity=".9"/><path d="M574.8 151.6L574.0 206.2" stroke="#8ea6ea" stroke-width="1.3" stroke-dasharray=".9 1.25" opacity=".9"/><path d="M462.6 158.4L462.6 176" stroke="#5c76c6" stroke-width="2.9" stroke-linecap="round" opacity=".9"/><path d="M462.6 158.4L462.6 176" stroke="#8ea6ea" stroke-width="1.3" stroke-dasharray=".9 1.25" opacity=".9"/><path d="M481.6 160L481.6 172" stroke="#5c76c6" stroke-width="2.9" stroke-linecap="round" opacity=".9"/><path d="M481.6 160L481.6 172" stroke="#8ea6ea" stroke-width="1.3" stroke-dasharray=".9 1.25" opacity=".9"/></g><g filter="url(#b07)"><path d="M479.4 151Q476 170 468 188L459.6 203.2H473.6Q479.6 186 483 170Q485.6 158 486.4 151Z" fill="#a892e6"/><path d="M483.4 152Q480 174 468.6 202" stroke="#e8e0fa" stroke-width="1.7" fill="none"/><path d="M480.8 152Q477 172 463 202" stroke="#7c62cc" stroke-width="1.3" fill="none"/><path d="M459.6 203.2H473.6L472.6 206.4H460.6Z" fill="#54459c"/><path d="M459.9 219.2L459.2 220.0L459.3 221.0L460.4 222.2L461.8 223.5L461.5 225.0L459.9 226.6L459.8 228.3L461.7 229.9L462.2 231.7L460.5 233.5L460.3 235.3L462.2 237.0L462.8 238.6L461.5 240.4L460.8 242.1L462.3 243.5L463.8 244.9L463.3 246.6L462.0 248.4L462.6 249.9L464.6 251.2L465.1 252.8L463.7 254.6L463.5 256.3L465.3 257.6L466.6 259.0L465.6 260.8L464.7 262.6L466.0 264.1L467.8 265.4L467.4 267.1L466.1 269.0L466.7 270.5L468.7 271.8L469.2 273.4L467.8 275.3L467.7 277.0L469.7 278.4L470.6 280.0L469.3 281.9L469.0 283.8L471.0 285.3L471.9 287.0L470.3 289.4L471.1 291.4L473.3 293.3L471.8 295.9L472.2 298.1L474.5 300.0L473.3 302.5L473.0 304.6L475.3 306.3L475.5 308.1L474.1 309.9L474.1 311.3L475.4 312.3L477.3 311.9L477.3 310.8L478.5 309.2L479.2 307.5L477.4 305.9L476.2 304.1L477.9 301.7L477.3 299.6L475.1 297.6L476.7 295.0L476.5 292.8L474.2 290.9L475.4 288.5L475.9 286.3L473.8 284.8L473.2 283.1L474.8 281.0L474.8 279.2L472.8 277.9L472.1 276.3L473.5 274.3L473.9 272.6L472.1 271.2L471.0 269.8L472.0 268.0L473.0 266.1L471.8 264.7L470.1 263.4L470.5 261.7L471.9 259.8L471.4 258.2L469.4 256.9L469.1 255.3L470.5 253.4L470.8 251.8L469.0 250.5L467.9 249.0L468.9 247.3L470.0 245.5L469.0 244.1L467.3 242.8L467.5 241.3L469.0 239.6L469.1 238.0L467.3 236.6L466.7 234.9L468.4 233.1L468.9 231.4L467.2 229.7L466.5 228.0L468.1 226.4L469.0 224.8L467.8 223.3L466.5 222.0L466.6 220.8L467.7 219.7L468.6 218.8Z" fill="#9d86e2"/><path d="M459.9 219.2L459.2 220.0L459.3 221.0L460.4 222.2L461.8 223.5L461.5 225.0L459.9 226.6L459.8 228.3L461.7 229.9L462.2 231.7L460.5 233.5L460.3 235.3L462.2 237.0L462.8 238.6L461.5 240.4L460.8 242.1L462.3 243.5L463.8 244.9L463.3 246.6L462.0 248.4L462.6 249.9L464.6 251.2L465.1 252.8L463.7 254.6L463.5 256.3L465.3 257.6L466.6 259.0L465.6 260.8L464.7 262.6L466.0 264.1L467.8 265.4L467.4 267.1L466.1 269.0L466.7 270.5L468.7 271.8L469.2 273.4L467.8 275.3L467.7 277.0L469.7 278.4L470.6 280.0L469.3 281.9L469.0 283.8L471.0 285.3L471.9 287.0L470.3 289.4L471.1 291.4L473.3 293.3L471.8 295.9L472.2 298.1L474.5 300.0L473.3 302.5L473.0 304.6L475.3 306.3L475.5 308.1L474.1 309.9L474.1 311.3L475.4 312.3" fill="none" stroke="#ebe3fb" stroke-width="1.2"/><path d="M468.6 218.8L467.7 219.7L466.6 220.8L466.5 222.0L467.8 223.3L469.0 224.8L468.1 226.4L466.5 228.0L467.2 229.7L468.9 231.4L468.4 233.1L466.7 234.9L467.3 236.6L469.1 238.0L469.0 239.6L467.5 241.3L467.3 242.8L469.0 244.1L470.0 245.5L468.9 247.3L467.9 249.0L469.0 250.5L470.8 251.8L470.5 253.4L469.1 255.3L469.4 256.9L471.4 258.2L471.9 259.8L470.5 261.7L470.1 263.4L471.8 264.7L473.0 266.1L472.0 268.0L471.0 269.8L472.1 271.2L473.9 272.6L473.5 274.3L472.1 276.3L472.8 277.9L474.8 279.2L474.8 281.0L473.2 283.1L473.8 284.8L475.9 286.3L475.4 288.5L474.2 290.9L476.5 292.8L476.7 295.0L475.1 297.6L477.3 299.6L477.9 301.7L476.2 304.1L477.4 305.9L479.2 307.5L478.5 309.2L477.3 310.8L477.3 311.9" fill="none" stroke="#ebe3fb" stroke-width="0.96" opacity=".8"/><path d="M464.0 219.0L464.0 219.9L464.1 220.9L464.1 222.1L464.1 223.4L464.2 224.9L464.2 226.5L464.3 228.1L464.3 229.8L464.4 231.6L464.5 233.3L464.6 235.1L464.7 236.8L464.8 238.4L465.0 240.0L465.2 241.5L465.4 243.1L465.6 244.6L465.8 246.2L466.0 247.7L466.3 249.3L466.6 250.9L466.8 252.4L467.1 254.0L467.4 255.6L467.7 257.2L468.0 258.8L468.2 260.4L468.5 262.0L468.8 263.6L469.0 265.2L469.3 266.8L469.6 268.4L469.9 270.0L470.2 271.6L470.4 273.2L470.7 274.8L471.0 276.4L471.3 278.1L471.6 279.8L471.9 281.5L472.2 283.2L472.5 285.0L472.8 286.9L473.2 288.9L473.5 291.0L473.9 293.2L474.3 295.5L474.6 297.7L475.0 299.9L475.4 302.1L475.7 304.2L476.0 306.1L476.3 307.9L476.6 309.5L476.8 310.9L477.0 312.0" fill="none" stroke="#7a60cc" stroke-width="1.1"/><path d="M486.7 167.8L486.9 168.8L488.1 169.7L489.6 170.6L489.6 172.0L488.4 173.9L488.8 175.4L491.0 176.7L490.9 178.4L489.6 180.4L490.8 181.9L492.4 183.3L491.3 185.1L490.3 186.6L491.7 187.9L492.7 189.3L491.5 190.5L489.9 191.5L490.4 193.0L491.4 194.8L490.5 196.1L488.5 197.0L488.4 198.6L489.4 200.6L488.8 202.1L486.7 203.3L486.5 205.1L487.9 207.1L487.5 208.8L485.7 210.5L486.2 212.3L487.8 214.2L486.8 216.0L485.6 217.9L487.3 219.8L488.0 221.6L486.3 223.6L486.9 225.5L488.7 227.2L487.8 229.1L486.8 231.1L488.6 232.6L489.6 234.2L488.3 236.2L488.2 238.1L490.2 239.3L491.2 240.7L490.2 242.8L490.2 244.4L492.2 245.4L493.4 246.6L492.4 248.4L492.0 249.9L493.5 251.0L494.8 252.2L493.9 253.6L492.6 254.8L493.2 256.1L494.4 257.8L493.6 259.0L491.6 259.9L491.6 261.5L492.5 263.6L491.4 264.8L489.3 265.7L489.2 267.4L489.9 269.6L488.5 270.8L486.5 271.8L486.8 273.7L487.6 275.7L486.3 277.0L484.5 278.1L484.8 279.9L485.8 281.9L484.6 283.2L482.8 284.4L483.1 286.1L484.2 288.0L483.2 289.4L481.3 290.5L481.4 292.1L482.6 294.0L482.0 295.3L480.1 296.3L479.6 297.7L480.7 299.6L480.8 301.2L478.9 302.3L477.9 303.6L478.9 305.5L479.3 307.2L477.7 308.2L476.3 309.3L476.6 310.7L477.6 312.2L477.7 313.3L476.9 314.0L475.9 314.5L479.9 315.6L480.4 315.0L480.3 314.0L479.4 312.7L479.0 311.4L480.1 310.3L481.8 309.4L482.1 308.0L481.0 306.1L481.2 304.6L483.2 303.5L484.0 302.1L482.9 300.2L482.8 298.6L484.7 297.6L485.8 296.4L485.0 294.6L484.3 292.9L485.8 291.7L487.5 290.5L487.0 288.7L486.0 286.9L487.3 285.6L489.1 284.4L488.7 282.7L487.8 280.8L489.1 279.5L490.9 278.4L490.6 276.7L489.7 274.8L491.1 273.6L493.1 272.8L492.9 271.0L492.3 268.9L494.0 267.8L495.9 266.9L495.6 264.9L495.1 262.9L496.8 261.7L498.5 260.4L497.8 258.5L496.9 256.7L498.0 255.1L499.4 253.4L498.8 251.7L497.0 250.3L496.9 248.8L498.1 246.8L497.7 245.2L495.7 244.2L494.9 242.8L495.9 240.8L495.8 239.2L493.8 238.2L493.1 236.9L494.4 235.0L494.5 233.5L492.5 232.1L492.3 230.4L493.9 228.4L493.1 226.7L491.4 225.1L492.6 223.1L493.4 221.2L491.5 219.5L491.4 217.7L493.2 215.9L492.4 214.2L491.0 212.4L492.3 210.8L493.6 209.3L492.4 207.7L491.7 206.1L493.3 205.0L494.7 203.8L493.9 202.0L493.4 200.3L495.0 199.2L496.7 198.1L496.1 196.2L495.3 194.4L496.6 193.0L498.3 191.7L498.1 189.9L496.7 188.1L496.9 186.4L498.5 184.5L498.0 182.7L496.1 181.1L496.6 179.1L497.7 177.0L496.1 175.5L494.7 174.1L495.8 172.1L496.3 170.4L494.9 169.3L493.5 168.4L493.4 167.4L494.2 166.4Z" fill="#a690e6"/><path d="M486.7 167.8L486.9 168.8L488.1 169.7L489.6 170.6L489.6 172.0L488.4 173.9L488.8 175.4L491.0 176.7L490.9 178.4L489.6 180.4L490.8 181.9L492.4 183.3L491.3 185.1L490.3 186.6L491.7 187.9L492.7 189.3L491.5 190.5L489.9 191.5L490.4 193.0L491.4 194.8L490.5 196.1L488.5 197.0L488.4 198.6L489.4 200.6L488.8 202.1L486.7 203.3L486.5 205.1L487.9 207.1L487.5 208.8L485.7 210.5L486.2 212.3L487.8 214.2L486.8 216.0L485.6 217.9L487.3 219.8L488.0 221.6L486.3 223.6L486.9 225.5L488.7 227.2L487.8 229.1L486.8 231.1L488.6 232.6L489.6 234.2L488.3 236.2L488.2 238.1L490.2 239.3L491.2 240.7L490.2 242.8L490.2 244.4L492.2 245.4L493.4 246.6L492.4 248.4L492.0 249.9L493.5 251.0L494.8 252.2L493.9 253.6L492.6 254.8L493.2 256.1L494.4 257.8L493.6 259.0L491.6 259.9L491.6 261.5L492.5 263.6L491.4 264.8L489.3 265.7L489.2 267.4L489.9 269.6L488.5 270.8L486.5 271.8L486.8 273.7L487.6 275.7L486.3 277.0L484.5 278.1L484.8 279.9L485.8 281.9L484.6 283.2L482.8 284.4L483.1 286.1L484.2 288.0L483.2 289.4L481.3 290.5L481.4 292.1L482.6 294.0L482.0 295.3L480.1 296.3L479.6 297.7L480.7 299.6L480.8 301.2L478.9 302.3L477.9 303.6L478.9 305.5L479.3 307.2L477.7 308.2L476.3 309.3L476.6 310.7L477.6 312.2L477.7 313.3L476.9 314.0L475.9 314.5" fill="none" stroke="#f0eafc" stroke-width="1.2"/><path d="M494.2 166.4L493.4 167.4L493.5 168.4L494.9 169.3L496.3 170.4L495.8 172.1L494.7 174.1L496.1 175.5L497.7 177.0L496.6 179.1L496.1 181.1L498.0 182.7L498.5 184.5L496.9 186.4L496.7 188.1L498.1 189.9L498.3 191.7L496.6 193.0L495.3 194.4L496.1 196.2L496.7 198.1L495.0 199.2L493.4 200.3L493.9 202.0L494.7 203.8L493.3 205.0L491.7 206.1L492.4 207.7L493.6 209.3L492.3 210.8L491.0 212.4L492.4 214.2L493.2 215.9L491.4 217.7L491.5 219.5L493.4 221.2L492.6 223.1L491.4 225.1L493.1 226.7L493.9 228.4L492.3 230.4L492.5 232.1L494.5 233.5L494.4 235.0L493.1 236.9L493.8 238.2L495.8 239.2L495.9 240.8L494.9 242.8L495.7 244.2L497.7 245.2L498.1 246.8L496.9 248.8L497.0 250.3L498.8 251.7L499.4 253.4L498.0 255.1L496.9 256.7L497.8 258.5L498.5 260.4L496.8 261.7L495.1 262.9L495.6 264.9L495.9 266.9L494.0 267.8L492.3 268.9L492.9 271.0L493.1 272.8L491.1 273.6L489.7 274.8L490.6 276.7L490.9 278.4L489.1 279.5L487.8 280.8L488.7 282.7L489.1 284.4L487.3 285.6L486.0 286.9L487.0 288.7L487.5 290.5L485.8 291.7L484.3 292.9L485.0 294.6L485.8 296.4L484.7 297.6L482.8 298.6L482.9 300.2L484.0 302.1L483.2 303.5L481.2 304.6L481.0 306.1L482.1 308.0L481.8 309.4L480.1 310.3L479.0 311.4L479.4 312.7L480.3 314.0L480.4 315.0L479.9 315.6" fill="none" stroke="#f0eafc" stroke-width="0.96" opacity=".8"/><path d="M491.0 167.0L491.2 167.9L491.4 168.9L491.7 170.1L492.0 171.5L492.4 173.0L492.7 174.5L493.1 176.2L493.5 177.9L493.8 179.6L494.1 181.4L494.3 183.1L494.5 184.8L494.6 186.5L494.6 188.0L494.5 189.5L494.3 191.0L494.0 192.4L493.6 193.9L493.2 195.3L492.7 196.8L492.2 198.2L491.7 199.7L491.3 201.2L490.8 202.7L490.4 204.2L490.1 205.8L489.8 207.4L489.6 209.0L489.5 210.7L489.4 212.4L489.4 214.2L489.4 216.0L489.5 217.8L489.6 219.6L489.7 221.5L489.8 223.4L490.0 225.2L490.2 227.0L490.3 228.8L490.6 230.6L490.8 232.3L491.0 234.0L491.3 235.6L491.6 237.2L492.1 238.8L492.5 240.3L493.0 241.8L493.6 243.3L494.1 244.8L494.5 246.2L495.0 247.7L495.4 249.1L495.7 250.6L495.9 252.0L496.0 253.5L496.0 255.0L495.8 256.5L495.6 258.0L495.2 259.5L494.7 261.0L494.1 262.5L493.5 264.0L492.9 265.5L492.2 267.0L491.5 268.5L490.8 270.0L490.1 271.5L489.5 273.0L488.9 274.5L488.4 276.0L487.9 277.5L487.5 279.0L487.0 280.6L486.6 282.1L486.2 283.6L485.7 285.2L485.3 286.7L484.9 288.2L484.5 289.7L484.1 291.2L483.8 292.7L483.4 294.2L483.0 295.6L482.6 297.0L482.2 298.4L481.8 299.9L481.4 301.4L481.0 302.9L480.6 304.4L480.1 305.9L479.7 307.3L479.4 308.7L479.0 310.0L478.6 311.3L478.3 312.4L478.0 313.4L477.8 314.3L477.6 315.0" fill="none" stroke="#8066d0" stroke-width="1.1"/><path d="M493 226.2Q499.6 229.6 502.6 223.6Q503.8 218.4 498.6 216.6" fill="none" stroke="#f2eefb" stroke-width="1.7"/><circle cx="493" cy="213.2" r="1.7" fill="#f2d4d2"/></g><g filter="url(#b04)" fill="none" stroke-linecap="round"><path d="M403.6 143.8Q408.7 248.3 399.4 352.9" stroke="#8898e2" stroke-width="2.8" opacity=".5"/><path d="M403.6 143.8Q408.7 248.3 399.4 352.9" stroke="#b0bcf4" stroke-width="1.6"/><path d="M403.6 143.8Q408.7 248.3 399.4 352.9" stroke="#dfe4fb" stroke-width=".55" opacity=".7"/><path d="M421.7 149.9Q419.8 240.4 412.4 330.8" stroke="#8898e2" stroke-width="2.8" opacity=".5"/><path d="M421.7 149.9Q419.8 240.4 412.4 330.8" stroke="#b0bcf4" stroke-width="1.6"/><path d="M421.7 149.9Q419.8 240.4 412.4 330.8" stroke="#dfe4fb" stroke-width=".55" opacity=".7"/><path d="M457.6 156.2Q453.7 257.5 444.0 358.9" stroke="#8898e2" stroke-width="2.8" opacity=".5"/><path d="M457.6 156.2Q453.7 257.5 444.0 358.9" stroke="#b0bcf4" stroke-width="1.6"/><path d="M457.6 156.2Q453.7 257.5 444.0 358.9" stroke="#dfe4fb" stroke-width=".55" opacity=".7"/><path d="M461.0 156.5Q452.6 266.5 446.9 376.5" stroke="#8898e2" stroke-width="2.8" opacity=".5"/><path d="M461.0 156.5Q452.6 266.5 446.9 376.5" stroke="#b0bcf4" stroke-width="1.6"/><path d="M461.0 156.5Q452.6 266.5 446.9 376.5" stroke="#dfe4fb" stroke-width=".55" opacity=".7"/><path d="M477.2 157.9Q473.0 258.4 462.7 358.9" stroke="#8898e2" stroke-width="2.8" opacity=".5"/><path d="M477.2 157.9Q473.0 258.4 462.7 358.9" stroke="#b0bcf4" stroke-width="1.6"/><path d="M477.2 157.9Q473.0 258.4 462.7 358.9" stroke="#dfe4fb" stroke-width=".55" opacity=".7"/><path d="M486.3 158.5Q483.5 262.2 479.2 366.0" stroke="#8898e2" stroke-width="2.8" opacity=".5"/><path d="M486.3 158.5Q483.5 262.2 479.2 366.0" stroke="#b0bcf4" stroke-width="1.6"/><path d="M486.3 158.5Q483.5 262.2 479.2 366.0" stroke="#dfe4fb" stroke-width=".55" opacity=".7"/><path d="M513.0 159.0Q512.0 272.2 512.6 385.3" stroke="#8898e2" stroke-width="2.8" opacity=".5"/><path d="M513.0 159.0Q512.0 272.2 512.6 385.3" stroke="#b0bcf4" stroke-width="1.6"/><path d="M513.0 159.0Q512.0 272.2 512.6 385.3" stroke="#dfe4fb" stroke-width=".55" opacity=".7"/><path d="M518.1 158.9Q513.1 255.4 519.0 351.9" stroke="#8898e2" stroke-width="2.8" opacity=".5"/><path d="M518.1 158.9Q513.1 255.4 519.0 351.9" stroke="#b0bcf4" stroke-width="1.6"/><path d="M518.1 158.9Q513.1 255.4 519.0 351.9" stroke="#dfe4fb" stroke-width=".55" opacity=".7"/><path d="M538.7 158.0Q527.5 246.1 525.6 334.3" stroke="#8898e2" stroke-width="2.8" opacity=".5"/><path d="M538.7 158.0Q527.5 246.1 525.6 334.3" stroke="#b0bcf4" stroke-width="1.6"/><path d="M538.7 158.0Q527.5 246.1 525.6 334.3" stroke="#dfe4fb" stroke-width=".55" opacity=".7"/><path d="M552.6 156.6Q539.3 272.3 535.5 388.0" stroke="#8898e2" stroke-width="2.8" opacity=".5"/><path d="M552.6 156.6Q539.3 272.3 535.5 388.0" stroke="#b0bcf4" stroke-width="1.6"/><path d="M552.6 156.6Q539.3 272.3 535.5 388.0" stroke="#dfe4fb" stroke-width=".55" opacity=".7"/><path d="M575.7 152.1Q560.4 255.5 558.3 358.9" stroke="#8898e2" stroke-width="2.8" opacity=".5"/><path d="M575.7 152.1Q560.4 255.5 558.3 358.9" stroke="#b0bcf4" stroke-width="1.6"/><path d="M575.7 152.1Q560.4 255.5 558.3 358.9" stroke="#dfe4fb" stroke-width=".55" opacity=".7"/></g><g transform="rotate(2.1 491.8 138.6)"><ellipse cx="491.8" cy="138.6" rx="94.5" ry="18.6" fill="url(#undg)"/><g clip-path="url(#undclip)" filter="url(#b07)" fill="none" stroke="#bcbff2" stroke-width="3.2" opacity=".92"><path d="M398 142Q416 126 446 124"/><path d="M404 150Q426 134 456 142"/><path d="M420 156Q434 142 466 152"/><path d="M428 126Q436 146 452 160"/><path d="M450 124Q460 138 476 142"/><path d="M408 130Q418 146 426 156"/><path d="M400 136Q406 146 412 152" stroke-width="2.4"/><path d="M520 124Q530 140 522 160" stroke="#8f96de" stroke-width="2"/><path d="M548 126Q562 140 556 158" stroke="#8f96de" stroke-width="1.8"/><path d="M500 126Q506 140 498 158" stroke="#9aa0e2" stroke-width="1.8"/></g><path d="M397.3 138.6A94.5 61.2 0 0 1 586.3 138.6A94.5 18.6 0 0 0 397.3 138.6Z" fill="url(#domeg)"/><g clip-path="url(#domeclip)"><g filter="url(#b07)" fill="none" stroke="#ccd0f8" stroke-width="4.3" stroke-linecap="round" opacity=".96"><ellipse cx="524" cy="100.4" rx="26.4" ry="16.6" transform="rotate(8 524 100.4)" stroke-width="4.6"/><path d="M434.6 121Q444 100 457 80"/><path d="M415.6 127Q422 106 433 90"/><path d="M441 103.6Q468 101 497 93" stroke-width="4.4"/><path d="M457 114.6Q474 104 497 98"/><path d="M452 86Q474 79 497 79.6" stroke-width="3.2"/><path d="M402.6 130Q406 116 414 104" stroke-width="3"/><path d="M540 88Q560 98 573 120"/><path d="M549 111Q566 118 584 137"/><path d="M516 77Q518 81 520 85" stroke-width="3"/><path d="M466 118Q484 116 500 112" stroke-width="3"/><path d="M407 131Q414 110 426 95" stroke-width="3.4"/><path d="M447 86Q470 77.6 493 78.6" stroke-width="3"/><path d="M566 97Q574 108 577 120" stroke-width="3.2"/><path d="M436 121Q458 104 480 100Q492 94 501 86" stroke-width="3.6"/></g><g filter="url(#b07)" fill="none" stroke="#f0f4ff" stroke-width="1.2" opacity=".55"><ellipse cx="524" cy="100.4" rx="26.4" ry="16.6" transform="rotate(8 524 100.4)"/><path d="M434.6 121Q444 100 457 80"/><path d="M441 103.6Q468 101 497 93"/><path d="M457 114.6Q474 104 497 98"/></g><g filter="url(#b12)" fill="none" stroke="#a0acea" stroke-width="2" opacity=".8"><path d="M509 100Q521 90 538 99Q532 112 516 110Z"/><path d="M518 92L528 110"/></g><path d="M397.3 138.6A94.5 61.2 0 0 1 586.3 138.6" fill="none" stroke="#b8def6" stroke-width="7" opacity=".5" filter="url(#b2)"/></g><path d="M397.3 138.6A94.5 61.2 0 0 1 586.3 138.6" fill="none" stroke="#b0d8f2" stroke-width="4" opacity=".6" filter="url(#b07)"/><path d="M397.3 138.6A94.5 61.2 0 0 1 586.3 138.6" fill="none" stroke="#d0f0fb" stroke-width="1.7" filter="url(#b04)"/><ellipse cx="491.8" cy="141.0" rx="93.3" ry="19.200000000000003" fill="none" stroke="#b4dcf5" stroke-width="6" opacity=".82" filter="url(#b07)"/><ellipse cx="491.8" cy="139.0" rx="93.9" ry="18.6" fill="none" stroke="#d6f2fc" stroke-width="1.4" opacity=".95" filter="url(#b04)"/><ellipse cx="491.8" cy="143.2" rx="93.3" ry="19.400000000000002" fill="none" stroke="#c8eaf9" stroke-width="1" opacity=".7" filter="url(#b04)"/></g><g filter="url(#b04)"><path d="M456.6 122V160" stroke="#d6d0f4" stroke-width="1.2" opacity=".85"/><path d="M459.6 122V160" stroke="#d6d0f4" stroke-width="1.2" opacity=".85"/><path d="M521.2 124V160" stroke="#d6d0f4" stroke-width="1.2" opacity=".85"/><path d="M525.6 124V160" stroke="#d6d0f4" stroke-width="1.2" opacity=".85"/><path d="M552.6 128V158" stroke="#d6d0f4" stroke-width="1.2" opacity=".85"/><path d="M466.4 142.6Q468 136.4 478 134.4Q482 128 487.6 125.6L496 125.6Q500 130 503.4 134.8Q510.4 137 512 142.8Q508 148.8 489 148.6Q470 148.4 466.4 142.6Z" fill="#e6eafb"/><path d="M480 133Q488 128 498 133L500 140H478Z" fill="#f6f8ff"/><path d="M487.6 146L486.4 166L489 175.6H493L494.6 166L492.6 146Z" fill="#eef0fa"/><path d="M488.6 150L489.4 166L490.6 174" stroke="#cfe6d6" stroke-width="1.2" fill="none"/><rect x="478.6" y="166.8" width="9.4" height="8.2" fill="#5a68bc"/></g><path d="M489.6 123.4L492.5 114.4L495.4 123.4Z" fill="#6fe04a"/><ellipse cx="492.5" cy="123.6" rx="3" ry="1.2" fill="#2f7a22"/><path d="M493.6 166.4H529" stroke="#d8443a" stroke-width="1" opacity=".85"/><path d="M528.8 163.6L536.4 166.6L528.8 169.8Z" fill="#e23a2c"/><ellipse cx="528.8" cy="166.7" rx="1.2" ry="3.1" fill="#8a1f18"/></svg></div><div style="left:177.40px;top:38.80px;width:20.00px;height:78.80px;background:#1d1d1d;border-radius:1.8px"></div><svg style="left:183.40px;top:42.60px;" width="8.00" height="3.00" viewBox="0 0 8 3"><path d="M0 .5H8M0 2.3H8" stroke="#5a5a5a" stroke-width=".8"/></svg><div style="left:178.60px;top:49.40px;width:17.80px;height:10.25px;background:#434343;border-radius:.8px"></div><div style="left:178.60px;top:60.55px;width:17.80px;height:10.25px;background:#41608a;border-radius:.8px"></div><div style="left:178.60px;top:71.70px;width:17.80px;height:10.25px;background:#434343;border-radius:.8px"></div><div style="left:178.60px;top:82.85px;width:17.80px;height:10.25px;background:#434343;border-radius:.8px"></div><div style="left:178.60px;top:94.00px;width:17.80px;height:10.25px;background:#434343;border-radius:.8px"></div><div style="left:178.60px;top:105.15px;width:17.80px;height:10.25px;background:#434343;border-radius:.8px .8px 1.6px 1.6px"></div><svg style="left:183.90px;top:50.58px;" width="7.20" height="8.00" viewBox="0 0 7.2 8"><path d="M1.2 4.2V2.2Q1.2 1.4 1.9 1.4Q2.5 1.4 2.5 2.2V1.2Q2.5 .4 3.2 .4Q3.9 .4 3.9 1.2V1.5Q3.9 .8 4.6 .8Q5.2 .8 5.2 1.6V2.2Q5.3 1.6 5.9 1.7Q6.4 1.8 6.4 2.6V5Q6.4 7.6 3.8 7.6Q2.2 7.6 1.4 6.2L.3 4.4Q.2 3.8 .8 3.8Q1.1 3.8 1.2 4.2Z" fill="#e4e4e4"/></svg><svg style="left:183.50px;top:61.72px;" width="8.00" height="8.00" viewBox="0 0 8 8"><path d="M4 .2L5.3 1.9H2.7ZM4 7.8L5.3 6.1H2.7ZM.2 4L1.9 2.7V5.3ZM7.8 4L6.1 2.7V5.3Z" fill="#eaf2fb"/><path d="M4 1.6V6.4M1.6 4H6.4" stroke="#eaf2fb" stroke-width=".8"/></svg><svg style="left:183.70px;top:73.08px;" width="7.60" height="7.60" viewBox="0 0 7.6 7.6"><path d="M6.4 3.8A2.6 2.6 0 1 1 3.8 1.2" fill="none" stroke="#d8d8d8" stroke-width="1"/><path d="M3.4 .1L5.2 1.2L3.4 2.4Z" fill="#d8d8d8"/><path d="M1.2 3.8A2.6 2.6 0 0 1 2 2" fill="none" stroke="#d8d8d8" stroke-width="1"/></svg><svg style="left:183.70px;top:84.23px;" width="7.60" height="7.60" viewBox="0 0 7.6 7.6"><rect x=".5" y="3.2" width="3.8" height="3.8" fill="none" stroke="#d8d8d8" stroke-width=".9"/><rect x=".5" y=".5" width="6.6" height="6.6" fill="none" stroke="#d8d8d8" stroke-width=".6" stroke-dasharray="1 .8"/><path d="M3.6 4L6.4 1.2M6.4 1.2H4.8M6.4 1.2V2.8" stroke="#d8d8d8" stroke-width=".8" fill="none"/></svg><svg style="left:183.70px;top:95.38px;" width="7.60" height="7.60" viewBox="0 0 7.6 7.6"><rect x="1" y="1" width="5.6" height="5.6" fill="none" stroke="#d8d8d8" stroke-width=".8"/><circle cx="1" cy="1" r=".9" fill="#d8d8d8"/><circle cx="6.6" cy="1" r=".9" fill="#d8d8d8"/><circle cx="1" cy="6.6" r=".9" fill="#d8d8d8"/><circle cx="6.6" cy="6.6" r=".9" fill="#d8d8d8"/></svg><svg style="left:183.70px;top:106.53px;" width="7.60" height="7.60" viewBox="0 0 7.6 7.6"><rect x=".5" y="2.8" width="4.2" height="4.2" fill="none" stroke="#d8d8d8" stroke-width=".7" stroke-dasharray="1 .7"/><path d="M2.6 5V.6M2.6 5H7M2.6 .3L3.5 1.6H1.7ZM7.3 5L6 4.1V5.9Z" stroke="#d8d8d8" stroke-width=".8" fill="#d8d8d8"/><path d="M5.8 1.4A2.6 2.6 0 0 1 6.4 3" stroke="#d8d8d8" stroke-width=".7" fill="none"/></svg><svg style="left:0.00px;top:0.00px;" width="1024.00" height="515.00" viewBox="0 0 1024 515"><path d="M685.6999999999999 61.9L683.1999999999999 50.699999999999996H689.6L687.1 61.9Z" fill="#4a76de"/><ellipse cx="686.4" cy="50.699999999999996" rx="3.2" ry="1.4" fill="#5c88ee"/><path d="M690.8 65.6L701.8 63.4V69.2L690.8 67.0Z" fill="#de4438"/><ellipse cx="701.8" cy="66.3" rx="1.3" ry="2.9" fill="#ee5a4c"/><path d="M681.8 65.3L671.1999999999999 63.5V69.1L681.8 67.3Z" fill="#d4d2d0"/><path d="M685.4 70.89999999999999L683.4 81.3H689.4L687.4 70.89999999999999Z" fill="#d4d2d0"/><rect x="682.6999999999999" y="62.599999999999994" width="7.4" height="7.4" fill="#f4f4f4"/></svg><div class="t" style="left:684.90px;top:42.20px;color:#9db4ee;font-size:5.4px;font-weight:400;">z</div><div class="t" style="left:703.40px;top:61.40px;color:#f2e6e4;font-size:5.4px;font-weight:400;">x</div><svg style="left:701.20px;top:46.40px;" width="5.40" height="6.00" viewBox="0 0 5.4 6"><rect x=".4" y="2.6" width="4.6" height="3.2" rx=".5" fill="#dedad6"/><path d="M1.4 2.6V1.7Q1.4 .6 2.7 .6Q4 .6 4 1.7" stroke="#dedad6" stroke-width=".8" fill="none"/></svg><svg style="left:675.60px;top:90.60px;" width="5.00" height="5.00" viewBox="0 0 5 5"><path d="M4.4 .4L.6 2.5L4.4 4.6" fill="none" stroke="#a49c96" stroke-width=".7"/><path d="M.6 2.5H4.4" stroke="#a49c96" stroke-width=".7"/></svg><div class="t" style="left:681.80px;top:88.60px;color:#a8a09a;font-size:6.6px;font-weight:400;">Top</div><div style="left:717.60px;top:13.40px;width:50.60px;height:10.60px;background:#3c3c3c;"></div><svg style="left:721.20px;top:16.10px;" width="5.60" height="5.60" viewBox="0 0 5.6 5.6"><circle cx="2.8" cy="2.8" r="2.7" fill="#d0d0d0"/><rect x="2.35" y="2.3" width=".9" height="2.3" fill="#3c3c3c"/><circle cx="2.8" cy="1.4" r=".55" fill="#3c3c3c"/></svg><div class="t" style="left:729.20px;top:14.50px;color:#c8c8c8;font-size:6.9px;font-weight:400;">Inspector</div><div class="t" style="left:773.20px;top:14.50px;color:#c8c8c8;font-size:6.9px;font-weight:400;">VRChat SDK</div><svg style="left:1008.40px;top:15.80px;" width="5.40" height="6.20" viewBox="0 0 5.4 6.2"><rect x=".4" y="2.6" width="4.4" height="3.2" fill="#b8b8b8"/><path d="M1.3 2.6V1.6Q1.3 .5 2.6 .5Q3.9 .5 3.9 1.6" stroke="#b8b8b8" stroke-width=".8" fill="none"/></svg><svg style="left:1019.40px;top:15.60px;" width="2.00" height="7.00" viewBox="0 0 2 7"><circle cx="1" cy="1" r=".65" fill="#bbb"/><circle cx="1" cy="3.3" r=".65" fill="#bbb"/><circle cx="1" cy="5.6" r=".65" fill="#bbb"/></svg><div style="left:717.60px;top:24.00px;width:306.40px;height:491.00px;background:#383838;"></div><svg style="left:721.00px;top:28.60px;" width="12.40" height="12.80" viewBox="0 0 12.4 12.8"><path d="M6 .4L11.6 3.3V9.3L6 12.2L.4 9.3V3.3Z" fill="#6ec7ef"/><path d="M6 .4L11.6 3.3L6 6.2L.4 3.3Z" fill="#a6e2fb"/><path d="M.4 3.3L6 6.2V12.2L.4 9.3Z" fill="#4db5e6"/><path d="M6 .4L11.6 3.3V9.3L6 12.2L.4 9.3V3.3ZM.4 3.3L6 6.2L11.6 3.3M6 6.2V12.2" fill="none" stroke="#2b7fb0" stroke-width=".5"/></svg><svg style="left:731.60px;top:40.60px;" width="3.40" height="2.40" viewBox="0 0 3.4 2.4"><path d="M0 0H3.4L1.7 2.2Z" fill="#c8c8c8"/></svg><div style="left:743.80px;top:30.60px;width:6.20px;height:6.20px;background:#2a2a2a;border-radius:1px;box-shadow:inset 0 0 0 .5px #1c1c1c"></div><svg style="left:743.80px;top:30.60px;" width="6.20" height="6.20" viewBox="0 0 10 10"><path d="M2 5.2L4.2 7.4L8.2 2.6" fill="none" stroke="#e8e8e8" stroke-width="1.5"/></svg><div style="left:753.00px;top:28.80px;width:230.80px;height:9.00px;background:#2a2a2a;border-radius:1.2px;box-shadow:inset 0 0 0 .5px #202020"></div><div class="t cj" style="left:755.20px;top:29.15px;color:#f0f0f0;font-size:6.6px;font-weight:700;letter-spacing:-0.3px;">海月の雫</div><div style="left:986.60px;top:30.40px;width:6.40px;height:6.40px;background:#2a2a2a;border-radius:1px;box-shadow:inset 0 0 0 .5px #1c1c1c"></div><div class="t" style="left:995.60px;top:28.90px;color:#c8c8c8;font-size:6.9px;font-weight:400;">Static</div><svg style="left:1018.60px;top:32.40px;" width="3.60" height="2.40" viewBox="0 0 3.6 2.4"><path d="M0 0H3.6L1.8 2.3Z" fill="#c4c4c4"/></svg><div class="t" style="left:738.80px;top:42.40px;color:#c8c8c8;font-size:6.9px;font-weight:400;">Tag</div><div style="left:754.00px;top:43.00px;width:124.20px;height:8.20px;background:#4f4f4f;border-radius:1.2px;box-shadow:inset 0 0 0 .5px #303030"></div><div class="t" style="left:756.20px;top:42.50px;color:#c8c8c8;font-size:6.9px;font-weight:400;">Untagged</div><svg style="left:871.60px;top:46.00px;" width="3.60" height="2.40" viewBox="0 0 3.6 2.4"><path d="M0 0H3.6L1.8 2.3Z" fill="#c4c4c4"/></svg><div class="t" style="left:885.60px;top:42.40px;color:#c8c8c8;font-size:6.9px;font-weight:400;">Layer</div><div style="left:906.40px;top:43.00px;width:117.60px;height:8.20px;background:#4f4f4f;border-radius:1.2px;box-shadow:inset 0 0 0 .5px #303030"></div><div class="t" style="left:908.60px;top:42.50px;color:#c8c8c8;font-size:6.9px;font-weight:400;">Default</div><svg style="left:1016.60px;top:46.00px;" width="3.60" height="2.40" viewBox="0 0 3.6 2.4"><path d="M0 0H3.6L1.8 2.3Z" fill="#c4c4c4"/></svg><div style="left:717.60px;top:54.00px;width:306.40px;height:0.70px;background:#1f1f1f;"></div><div style="left:717.60px;top:54.60px;width:306.40px;height:14.00px;background:#3e3e3e;"></div><svg style="left:720.40px;top:60.10px;" width="4.40" height="3.20" viewBox="0 0 4.4 3.2"><path d="M0 0H4.4L2.2 3Z" fill="#8e8e8e"/></svg><svg style="left:728.60px;top:57.80px;" width="7.60" height="7.60" viewBox="0 0 7.6 7.6"><path d="M3.8 4.2V.8M3.8 4.2L.8 6.4M3.8 4.2L6.8 6.4" stroke-width="1" fill="none" stroke="#ccc"/><path d="M3.8 .2L4.9 1.9H2.7Z" fill="#9bd44e"/><path d="M.3 6.9L.9 5L2.1 6.6Z" fill="#e8584c"/><path d="M7.3 6.9L6.7 5L5.5 6.6Z" fill="#4f8cf0"/></svg><div class="t" style="left:750.20px;top:57.20px;color:#e4e4e4;font-size:7.15px;font-weight:700;">Transform</div><svg style="left:995.60px;top:58.40px;" width="6.40" height="6.40" viewBox="0 0 6.4 6.4"><circle cx="3.2" cy="3.2" r="3" fill="#d0d0d0"/><path d="M2.2 2.5Q2.2 1.5 3.2 1.5Q4.2 1.5 4.2 2.4Q4.2 3 3.2 3.4V4" stroke="#3e3e3e" stroke-width=".8" fill="none"/><circle cx="3.2" cy="5" r=".5" fill="#3e3e3e"/></svg><svg style="left:1006.80px;top:58.60px;" width="6.60" height="6.00" viewBox="0 0 6.6 6"><path d="M.4 1.6H6.2M.4 4.4H6.2" stroke="#c8c8c8" stroke-width=".8"/><path d="M4 .4V2.8M2.2 3.2V5.6" stroke="#c8c8c8" stroke-width="1"/></svg><svg style="left:1019.60px;top:58.20px;" width="2.00" height="7.00" viewBox="0 0 2 7"><circle cx="1" cy="1" r=".65" fill="#bbb"/><circle cx="1" cy="3.3" r=".65" fill="#bbb"/><circle cx="1" cy="5.6" r=".65" fill="#bbb"/></svg><div class="t" style="left:727.60px;top:70.30px;color:#c8c8c8;font-size:6.9px;font-weight:400;">Position</div><div class="t" style="left:847.60px;top:70.30px;color:#c8c8c8;font-size:6.9px;font-weight:400;">X</div><div style="left:854.90px;top:70.25px;width:49.80px;height:9.10px;background:#2a2a2a;border-radius:1.2px;box-shadow:inset 0 0 0 .5px #202020"></div><div class="t" style="left:856.70px;top:70.40px;color:#d6d6d6;font-size:6.9px;font-weight:400;">0.6429093</div><div class="t" style="left:909.20px;top:70.30px;color:#c8c8c8;font-size:6.9px;font-weight:400;">Y</div><div style="left:915.70px;top:70.25px;width:49.70px;height:9.10px;background:#2a2a2a;border-radius:1.2px;box-shadow:inset 0 0 0 .5px #202020"></div><div class="t" style="left:917.50px;top:70.40px;color:#d6d6d6;font-size:6.9px;font-weight:400;">0.9929323</div><div class="t" style="left:969.60px;top:70.30px;color:#c8c8c8;font-size:6.9px;font-weight:400;">Z</div><div style="left:975.80px;top:70.25px;width:49.20px;height:9.10px;background:#2a2a2a;border-radius:1.2px;box-shadow:inset 0 0 0 .5px #202020"></div><div class="t" style="left:977.60px;top:70.40px;color:#d6d6d6;font-size:6.9px;font-weight:400;">-0.5497565</div><div class="t" style="left:727.60px;top:81.00px;color:#c8c8c8;font-size:6.9px;font-weight:400;">Rotation</div><div class="t" style="left:847.60px;top:81.00px;color:#c8c8c8;font-size:6.9px;font-weight:400;">X</div><div style="left:854.90px;top:80.95px;width:49.80px;height:9.10px;background:#2a2a2a;border-radius:1.2px;box-shadow:inset 0 0 0 .5px #202020"></div><div class="t" style="left:856.70px;top:81.10px;color:#d6d6d6;font-size:6.9px;font-weight:400;">86.126</div><div class="t" style="left:909.20px;top:81.00px;color:#c8c8c8;font-size:6.9px;font-weight:400;">Y</div><div style="left:915.70px;top:80.95px;width:49.70px;height:9.10px;background:#2a2a2a;border-radius:1.2px;box-shadow:inset 0 0 0 .5px #202020"></div><div class="t" style="left:917.50px;top:81.10px;color:#d6d6d6;font-size:6.9px;font-weight:400;">53.536</div><div class="t" style="left:969.60px;top:81.00px;color:#c8c8c8;font-size:6.9px;font-weight:400;">Z</div><div style="left:975.80px;top:80.95px;width:49.20px;height:9.10px;background:#2a2a2a;border-radius:1.2px;box-shadow:inset 0 0 0 .5px #202020"></div><div class="t" style="left:977.60px;top:81.10px;color:#d6d6d6;font-size:6.9px;font-weight:400;">-39.141</div><div class="t" style="left:727.60px;top:91.70px;color:#c8c8c8;font-size:6.9px;font-weight:400;">Scale</div><svg style="left:834.60px;top:93.80px;" width="6.60" height="4.80" viewBox="0 0 6.6 4.8"><path d="M2.6 1H1.6Q.4 1 .4 2.4Q.4 3.8 1.6 3.8H2.6M4 1H5Q6.2 1 6.2 2.4Q6.2 3.8 5 3.8H4" fill="none" stroke="#7c7c7c" stroke-width=".8"/><path d="M2.4 2.4H4.2" stroke="#7c7c7c" stroke-width=".8"/></svg><div class="t" style="left:847.60px;top:91.70px;color:#c8c8c8;font-size:6.9px;font-weight:400;">X</div><div style="left:854.90px;top:91.65px;width:49.80px;height:9.10px;background:#2a2a2a;border-radius:1.2px;box-shadow:inset 0 0 0 .5px #202020"></div><div class="t" style="left:856.70px;top:91.80px;color:#d6d6d6;font-size:6.9px;font-weight:400;">1</div><div class="t" style="left:909.20px;top:91.70px;color:#c8c8c8;font-size:6.9px;font-weight:400;">Y</div><div style="left:915.70px;top:91.65px;width:49.70px;height:9.10px;background:#2a2a2a;border-radius:1.2px;box-shadow:inset 0 0 0 .5px #202020"></div><div class="t" style="left:917.50px;top:91.80px;color:#d6d6d6;font-size:6.9px;font-weight:400;">1</div><div class="t" style="left:969.60px;top:91.70px;color:#c8c8c8;font-size:6.9px;font-weight:400;">Z</div><div style="left:975.80px;top:91.65px;width:49.20px;height:9.10px;background:#2a2a2a;border-radius:1.2px;box-shadow:inset 0 0 0 .5px #202020"></div><div class="t" style="left:977.60px;top:91.80px;color:#d6d6d6;font-size:6.9px;font-weight:400;">1</div><div style="left:717.60px;top:68.40px;width:1.50px;height:22.60px;background:#3a79bb;"></div><div style="left:717.60px;top:105.80px;width:306.40px;height:0.70px;background:#1f1f1f;"></div><div style="left:717.60px;top:106.40px;width:306.40px;height:11.40px;background:#3e3e3e;"></div><svg style="left:720.40px;top:110.60px;" width="4.40" height="3.20" viewBox="0 0 4.4 3.2"><path d="M0 0H4.4L2.2 3Z" fill="#8e8e8e"/></svg><svg style="left:728.80px;top:108.30px;" width="8.00" height="7.80" viewBox="0 0 8 7.8"><path d="M.6 .8H5.2L7.2 3.8L3.8 7.2L2.2 4.4L.6 3Z" fill="#e6e0dc"/><path d="M1 2.2L6.2 4.6M2.6 .9L4.6 6.4" stroke="#7a6060" stroke-width=".6"/><path d="M5.4 1L7.2 3.8L5.6 5.4" fill="#c06868"/></svg><div style="left:739.40px;top:108.90px;width:6.40px;height:6.40px;background:#2a2a2a;border-radius:1px;box-shadow:inset 0 0 0 .5px #1c1c1c"></div><svg style="left:739.40px;top:108.90px;" width="6.40" height="6.40" viewBox="0 0 10 10"><path d="M2 5.2L4.2 7.4L8.2 2.6" fill="none" stroke="#e8e8e8" stroke-width="1.5"/></svg><div class="t" style="left:750.20px;top:107.70px;color:#e4e4e4;font-size:7.15px;font-weight:700;">Parent Constraint</div><svg style="left:995.60px;top:108.90px;" width="6.40" height="6.40" viewBox="0 0 6.4 6.4"><circle cx="3.2" cy="3.2" r="3" fill="#d0d0d0"/><path d="M2.2 2.5Q2.2 1.5 3.2 1.5Q4.2 1.5 4.2 2.4Q4.2 3 3.2 3.4V4" stroke="#3e3e3e" stroke-width=".8" fill="none"/><circle cx="3.2" cy="5" r=".5" fill="#3e3e3e"/></svg><svg style="left:1006.80px;top:109.10px;" width="6.60" height="6.00" viewBox="0 0 6.6 6"><path d="M.4 1.6H6.2M.4 4.4H6.2" stroke="#c8c8c8" stroke-width=".8"/><path d="M4 .4V2.8M2.2 3.2V5.6" stroke="#c8c8c8" stroke-width="1"/></svg><svg style="left:1019.60px;top:108.70px;" width="2.00" height="7.00" viewBox="0 0 2 7"><circle cx="1" cy="1" r=".65" fill="#bbb"/><circle cx="1" cy="3.3" r=".65" fill="#bbb"/><circle cx="1" cy="5.6" r=".65" fill="#bbb"/></svg><div style="left:727.60px;top:120.00px;width:152.80px;height:10.00px;background:#585858;border-radius:1.2px;box-shadow:inset 0 0 0 .5px #2f2f2f"></div><div class="t" style="left:804.00px;top:120.60px;color:#e4e4e4;font-size:6.9px;font-weight:400;transform:translateX(-50%);">Activate</div><div style="left:883.60px;top:120.00px;width:140.40px;height:10.00px;background:#585858;border-radius:1.2px;box-shadow:inset 0 0 0 .5px #2f2f2f"></div><div class="t" style="left:953.40px;top:120.60px;color:#e4e4e4;font-size:6.9px;font-weight:400;transform:translateX(-50%);">Zero</div><div class="t" style="left:727.60px;top:132.20px;color:#c8c8c8;font-size:6.9px;font-weight:400;">Is Active</div><div style="left:847.20px;top:133.40px;width:6.40px;height:6.40px;background:#2a2a2a;border-radius:1px;box-shadow:inset 0 0 0 .5px #1c1c1c"></div><svg style="left:847.20px;top:133.40px;" width="6.40" height="6.40" viewBox="0 0 10 10"><path d="M2 5.2L4.2 7.4L8.2 2.6" fill="none" stroke="#e8e8e8" stroke-width="1.5"/></svg><div class="t" style="left:727.60px;top:142.90px;color:#c8c8c8;font-size:6.9px;font-weight:400;">Weight</div><div style="left:847.40px;top:147.00px;width:143.00px;height:1.10px;background:#5e5e5e;border-radius:.5px"></div><svg style="left:989.60px;top:144.20px;" width="6.60" height="6.60" viewBox="0 0 6.6 6.6"><circle cx="3.3" cy="3.3" r="2.9" fill="#999"/></svg><div style="left:999.60px;top:143.00px;width:25.00px;height:9.10px;background:#2a2a2a;border-radius:1.2px;box-shadow:inset 0 0 0 .5px #202020"></div><div class="t" style="left:1001.60px;top:143.10px;color:#d6d6d6;font-size:6.9px;font-weight:400;">1</div><svg style="left:720.40px;top:157.10px;" width="4.40" height="3.20" viewBox="0 0 4.4 3.2"><path d="M0 0H4.4L2.2 3Z" fill="#8e8e8e"/></svg><div class="t" style="left:727.60px;top:154.10px;color:#c8c8c8;font-size:6.9px;font-weight:400;">Constraint Settings</div><div style="left:727.60px;top:164.40px;width:294.60px;height:8.40px;background:#3a3a3a;box-shadow:inset 0 0 0 .5px #262626;border-radius:1.4px 1.4px 0 0"></div><div class="t" style="left:730.80px;top:164.10px;color:#d8d8d8;font-size:6.9px;font-weight:400;">Sources</div><div style="left:727.60px;top:172.80px;width:294.60px;height:52.60px;background:#434343;box-shadow:inset 0 0 0 .5px #262626;border-radius:0 0 0 1.4px"></div><div style="left:717.60px;top:164.40px;width:1.50px;height:8.60px;background:#3a79bb;"></div><div style="left:717.60px;top:201.20px;width:1.50px;height:9.20px;background:#3a79bb;"></div><svg style="left:730.20px;top:180.10px;" width="4.40" height="3.20" viewBox="0 0 4.4 3.2"><path d="M0 .5H4.4M0 2.5H4.4" stroke="#6a6a6a" stroke-width=".7"/></svg><div style="left:738.00px;top:177.00px;width:240.40px;height:9.40px;background:#2a2a2a;border-radius:1.2px;box-shadow:inset 0 0 0 .5px #202020"></div><svg style="left:739.60px;top:178.90px;" width="5.60" height="5.60" viewBox="0 0 5.6 5.6"><path d="M2.8 3V.9M2.8 3L.8 4.6M2.8 3L4.8 4.6" stroke="#c8c8c8" stroke-width=".8" fill="none"/><path d="M2.8 .2L3.6 1.5H2ZM.2 5L.7 3.6L1.6 4.8ZM5.4 5L4.9 3.6L4 4.8Z" fill="#c8c8c8"/></svg><div class="t cj" style="left:746.00px;top:177.51px;color:#d4d4d4;font-size:6.45px;font-weight:400;">地面</div><div class="t" style="left:758.90px;top:177.30px;color:#d4d4d4;font-size:6.9px;font-weight:400;"> (Transform)</div><div style="left:978.40px;top:177.00px;width:10.60px;height:9.40px;background:#2f2f2f;border-radius:0 1.2px 1.2px 0"></div><svg style="left:980.40px;top:178.70px;" width="6.00" height="6.00" viewBox="0 0 6 6"><circle cx="3" cy="3" r="2.5" fill="none" stroke="#8e8e8e" stroke-width=".8"/><circle cx="3" cy="3" r="1" fill="#8e8e8e"/></svg><div style="left:989.60px;top:177.00px;width:32.00px;height:9.40px;background:#2a2a2a;border-radius:1.2px;box-shadow:inset 0 0 0 .5px #202020"></div><div class="t" style="left:992.40px;top:177.30px;color:#d6d6d6;font-size:6.9px;font-weight:400;">0</div><svg style="left:730.20px;top:192.37px;" width="4.40" height="3.20" viewBox="0 0 4.4 3.2"><path d="M0 .5H4.4M0 2.5H4.4" stroke="#6a6a6a" stroke-width=".7"/></svg><div style="left:738.00px;top:189.27px;width:240.40px;height:9.40px;background:#2a2a2a;border-radius:1.2px;box-shadow:inset 0 0 0 .5px #202020"></div><svg style="left:739.60px;top:191.17px;" width="5.60" height="5.60" viewBox="0 0 5.6 5.6"><path d="M2.8 3V.9M2.8 3L.8 4.6M2.8 3L4.8 4.6" stroke="#c8c8c8" stroke-width=".8" fill="none"/><path d="M2.8 .2L3.6 1.5H2ZM.2 5L.7 3.6L1.6 4.8ZM5.4 5L4.9 3.6L4 4.8Z" fill="#c8c8c8"/></svg><div class="t cj" style="left:746.00px;top:189.78px;color:#d4d4d4;font-size:6.45px;font-weight:400;">空中</div><div class="t" style="left:758.90px;top:189.57px;color:#d4d4d4;font-size:6.9px;font-weight:400;">end (Transform)</div><div style="left:978.40px;top:189.27px;width:10.60px;height:9.40px;background:#2f2f2f;border-radius:0 1.2px 1.2px 0"></div><svg style="left:980.40px;top:190.97px;" width="6.00" height="6.00" viewBox="0 0 6 6"><circle cx="3" cy="3" r="2.5" fill="none" stroke="#8e8e8e" stroke-width=".8"/><circle cx="3" cy="3" r="1" fill="#8e8e8e"/></svg><div style="left:989.60px;top:189.27px;width:32.00px;height:9.40px;background:#2a2a2a;border-radius:1.2px;box-shadow:inset 0 0 0 .5px #202020"></div><div class="t" style="left:992.40px;top:189.57px;color:#d6d6d6;font-size:6.9px;font-weight:400;">0</div><svg style="left:730.20px;top:204.64px;" width="4.40" height="3.20" viewBox="0 0 4.4 3.2"><path d="M0 .5H4.4M0 2.5H4.4" stroke="#6a6a6a" stroke-width=".7"/></svg><div style="left:738.00px;top:201.54px;width:240.40px;height:9.40px;background:#2a2a2a;border-radius:1.2px;box-shadow:inset 0 0 0 .5px #202020"></div><svg style="left:739.60px;top:203.44px;" width="5.60" height="5.60" viewBox="0 0 5.6 5.6"><path d="M2.8 3V.9M2.8 3L.8 4.6M2.8 3L4.8 4.6" stroke="#c8c8c8" stroke-width=".8" fill="none"/><path d="M2.8 .2L3.6 1.5H2ZM.2 5L.7 3.6L1.6 4.8ZM5.4 5L4.9 3.6L4 4.8Z" fill="#c8c8c8"/></svg><div class="t cj" style="left:746.00px;top:202.05px;color:#d4d4d4;font-size:6.45px;font-weight:400;">手</div><div class="t" style="left:752.45px;top:201.84px;color:#d4d4d4;font-size:6.9px;font-weight:400;"> (Transform)</div><div style="left:978.40px;top:201.54px;width:10.60px;height:9.40px;background:#2f2f2f;border-radius:0 1.2px 1.2px 0"></div><svg style="left:980.40px;top:203.24px;" width="6.00" height="6.00" viewBox="0 0 6 6"><circle cx="3" cy="3" r="2.5" fill="none" stroke="#8e8e8e" stroke-width=".8"/><circle cx="3" cy="3" r="1" fill="#8e8e8e"/></svg><div style="left:989.60px;top:201.54px;width:32.00px;height:9.40px;background:#2a2a2a;border-radius:1.2px;box-shadow:inset 0 0 0 .5px #202020"></div><div class="t" style="left:992.40px;top:201.84px;color:#d6d6d6;font-size:6.9px;font-weight:400;">1</div><svg style="left:730.20px;top:216.91px;" width="4.40" height="3.20" viewBox="0 0 4.4 3.2"><path d="M0 .5H4.4M0 2.5H4.4" stroke="#6a6a6a" stroke-width=".7"/></svg><div style="left:738.00px;top:213.81px;width:240.40px;height:9.40px;background:#2a2a2a;border-radius:1.2px;box-shadow:inset 0 0 0 .5px #202020"></div><svg style="left:739.60px;top:215.71px;" width="5.60" height="5.60" viewBox="0 0 5.6 5.6"><path d="M2.8 3V.9M2.8 3L.8 4.6M2.8 3L4.8 4.6" stroke="#c8c8c8" stroke-width=".8" fill="none"/><path d="M2.8 .2L3.6 1.5H2ZM.2 5L.7 3.6L1.6 4.8ZM5.4 5L4.9 3.6L4 4.8Z" fill="#c8c8c8"/></svg><div class="t cj" style="left:746.00px;top:214.32px;color:#d4d4d4;font-size:6.45px;font-weight:400;">手</div><div class="t" style="left:752.45px;top:214.11px;color:#d4d4d4;font-size:6.9px;font-weight:400;">2 (Transform)</div><div style="left:978.40px;top:213.81px;width:10.60px;height:9.40px;background:#2f2f2f;border-radius:0 1.2px 1.2px 0"></div><svg style="left:980.40px;top:215.51px;" width="6.00" height="6.00" viewBox="0 0 6 6"><circle cx="3" cy="3" r="2.5" fill="none" stroke="#8e8e8e" stroke-width=".8"/><circle cx="3" cy="3" r="1" fill="#8e8e8e"/></svg><div style="left:989.60px;top:213.81px;width:32.00px;height:9.40px;background:#2a2a2a;border-radius:1.2px;box-shadow:inset 0 0 0 .5px #202020"></div><div class="t" style="left:992.40px;top:214.11px;color:#d6d6d6;font-size:6.9px;font-weight:400;">0</div><div style="left:990.80px;top:225.40px;width:28.40px;height:11.60px;background:#434343;border-radius:0 0 1.6px 1.6px;box-shadow:inset 0 0 0 .5px #2a2a2a"></div><svg style="left:995.00px;top:228.40px;" width="6.00" height="6.00" viewBox="0 0 6 6"><path d="M3 .4V5.6M.4 3H5.6" stroke="#e0e0e0" stroke-width="1"/></svg><svg style="left:1008.60px;top:228.40px;" width="6.00" height="6.00" viewBox="0 0 6 6"><path d="M.6 3H5.4" stroke="#e0e0e0" stroke-width="1"/></svg><div style="left:717.60px;top:241.00px;width:306.40px;height:0.80px;background:#222;"></div><div style="left:812.20px;top:247.60px;width:121.40px;height:10.40px;background:#585858;border-radius:1.2px;box-shadow:inset 0 0 0 .5px #2f2f2f"></div><div class="t" style="left:873.00px;top:248.40px;color:#e4e4e4;font-size:6.9px;font-weight:400;transform:translateX(-50%);">Add Component</div><svg style="left:736.00px;top:207.00px;" width="90.00" height="20.00" viewBox="0 0 90 20"><path d="M3.6 4.6H84.4" stroke="#43de7b" stroke-width="2.2" stroke-linecap="round"/><path d="M3.4 16.3H84.4" stroke="#4640dc" stroke-width="2.0" stroke-linecap="round"/></svg><svg style="left:0;top:0;pointer-events:none" width="1024" height="515" viewBox="0 0 1024 515"><defs><filter id="ab" x="-5%" y="-5%" width="110%" height="110%"><feGaussianBlur stdDeviation=".32"/></filter></defs><g filter="url(#ab)"><text x="736.1" y="254" font-family="'Liberation Sans','Noto Sans CJK JP',sans-serif" font-size="19" fill="#e9525c" stroke="#e9525c" stroke-width=".25" textLength="183.5" lengthAdjust="spacing">手を1にして位置調整</text><text x="736.1" y="280.5" font-family="'Liberation Sans','Noto Sans CJK JP',sans-serif" font-size="19" fill="#e9525c" stroke="#e9525c" stroke-width=".25" textLength="107.7" lengthAdjust="spacing">手2も同様に</text><text x="809.5" y="43" font-family="'Liberation Sans','Noto Sans CJK JP',sans-serif" font-size="17.5" fill="#e9525c" stroke="#e9525c" stroke-width=".25" textLength="53" lengthAdjust="spacing">つける</text><path d="M789.2 38.0L791.8 36.0L793.7 39.6Q798 31.8 803.8 26.2L805 27.3Q798.8 35.2 794.3 43.5L792.3 43.5Z" fill="#e9525c" stroke="#e9525c" stroke-width=".5" stroke-linejoin="round"/><path d="M922.8 242.2Q939 236.4 951 229.4Q967 219.8 988.6 208.6" fill="none" stroke="#e9525c" stroke-width="2.2" stroke-linecap="round"/><path d="M981.6 204.2L989.6 208L986.8 214.6" fill="none" stroke="#e9525c" stroke-width="2.0" stroke-linecap="round" stroke-linejoin="round"/></g></svg><div style="left:0.00px;top:404.80px;width:716.20px;height:10.60px;background:#282828;"></div><div style="left:0.00px;top:404.80px;width:40.20px;height:10.60px;background:#3c3c3c;"></div><svg style="left:1.40px;top:407.60px;" width="6.40" height="5.00" viewBox="0 0 6.4 5"><path d="M.2 .6H2.4L3 1.4H6.2V4.8H.2Z" fill="#c8c8c8"/></svg><div class="t" style="left:8.80px;top:405.80px;color:#c8c8c8;font-size:6.9px;font-weight:400;">Project</div><svg style="left:45.60px;top:407.00px;" width="5.40" height="6.20" viewBox="0 0 5.4 6.2"><rect x=".4" y=".4" width="4.6" height="5.4" rx=".6" fill="#c8c8c8"/><path d="M1.4 1.8H4M1.4 3.1H4M1.4 4.4H3" stroke="#282828" stroke-width=".6"/></svg><div class="t" style="left:53.00px;top:405.80px;color:#c8c8c8;font-size:6.9px;font-weight:400;">Console</div><svg style="left:697.40px;top:407.20px;" width="5.40" height="6.20" viewBox="0 0 5.4 6.2"><rect x=".4" y="2.6" width="4.4" height="3.2" fill="#b8b8b8"/><path d="M1.3 2.6V1.6Q1.3 .5 2.6 .5Q3.9 .5 3.9 1.6" stroke="#b8b8b8" stroke-width=".8" fill="none"/></svg><svg style="left:708.60px;top:407.00px;" width="2.00" height="7.00" viewBox="0 0 2 7"><circle cx="1" cy="1" r=".65" fill="#bbb"/><circle cx="1" cy="3.3" r=".65" fill="#bbb"/><circle cx="1" cy="5.6" r=".65" fill="#bbb"/></svg><div style="left:0.00px;top:415.40px;width:716.20px;height:10.20px;background:#3c3c3c;"></div><svg style="left:1.60px;top:417.40px;" width="6.40" height="6.40" viewBox="0 0 6.4 6.4"><path d="M3.2 0V6.4M0 3.2H6.4" stroke="#d0d0d0" stroke-width="1"/></svg><svg style="left:8.80px;top:419.60px;" width="3.20" height="2.40" viewBox="0 0 3.2 2.4"><path d="M0 0H3.2L1.6 2.1Z" fill="#c0c0c0"/></svg><div style="left:467.00px;top:416.60px;width:161.60px;height:7.80px;background:#2a2a2a;border-radius:1.4px;box-shadow:inset 0 0 0 .5px #202020"></div><svg style="left:469.60px;top:418.40px;" width="4.40" height="4.40" viewBox="0 0 4.4 4.4"><circle cx="1.7" cy="1.7" r="1.2" fill="none" stroke="#8a8a8a" stroke-width=".6"/><path d="M2.6 2.6L3.9 3.9" stroke="#8a8a8a" stroke-width=".7"/></svg><svg style="left:630.20px;top:417.60px;" width="6.00" height="6.00" viewBox="0 0 6 6"><rect x="2" y=".4" width="3.4" height="4" fill="none" stroke="#c0c0c0" stroke-width=".7"/><rect x=".4" y="2.2" width="2.6" height="3.2" fill="#3c3c3c" stroke="#c0c0c0" stroke-width=".7"/></svg><svg style="left:641.60px;top:417.40px;" width="7.00" height="6.40" viewBox="0 0 7 6.4"><circle cx="2" cy="1.6" r="1.5" fill="#d8d8d8"/><circle cx="5.2" cy="3.2" r="1.4" fill="#d8d8d8"/><circle cx="2.4" cy="4.8" r="1.4" fill="#d8d8d8"/></svg><svg style="left:656.00px;top:417.60px;" width="6.40" height="6.00" viewBox="0 0 6.4 6"><path d="M.4 3.4L3.2 .6H5.8V3.2L3 6Z" fill="#d8d8d8"/><circle cx="4.6" cy="1.8" r=".6" fill="#3c3c3c"/></svg><svg style="left:669.60px;top:417.20px;" width="6.80" height="6.80" viewBox="0 0 6.8 6.8"><circle cx="3.4" cy="3.4" r="3.2" fill="#e0e0e0"/><rect x="2.9" y="1.4" width="1" height="2.6" fill="#3c3c3c"/><circle cx="3.4" cy="5" r=".6" fill="#3c3c3c"/></svg><svg style="left:684.00px;top:417.40px;" width="6.40" height="6.40" viewBox="0 0 6.4 6.4"><path d="M3.2 .4L4 2.4L6.2 2.6L4.6 4L5 6.1L3.2 5L1.4 6.1L1.8 4L.2 2.6L2.4 2.4Z" fill="#787878"/></svg><svg style="left:696.60px;top:418.00px;" width="8.00" height="5.40" viewBox="0 0 8 5.4"><path d="M.3 2.7Q3.4 -.9 6.5 2.7Q3.4 6.3 .3 2.7Z" fill="#c8c8c8"/><circle cx="3.4" cy="2.7" r="1.1" fill="#3c3c3c"/><path d="M.8 5L6.2 .4" stroke="#3c3c3c" stroke-width=".9"/><path d="M1.2 5.3L6.6 .7" stroke="#c8c8c8" stroke-width=".6"/></svg><div class="t" style="left:704.60px;top:416.20px;color:#c8c8c8;font-size:6.6px;font-weight:400;">37</div><div style="left:0.00px;top:425.60px;width:108.00px;height:89.40px;background:#383838;"></div><div style="left:101.60px;top:425.60px;width:5.60px;height:89.40px;background:#353535;"></div><div style="left:102.20px;top:487.00px;width:4.50px;height:16.80px;background:#666768;border-radius:2.1px"></div><svg style="left:102.40px;top:428.60px;" width="4.00" height="3.00" viewBox="0 0 4 3"><path d="M0 2.6L2 0L4 2.6Z" fill="#c0c0c0"/></svg><svg style="left:102.40px;top:510.60px;" width="4.00" height="3.00" viewBox="0 0 4 3"><path d="M0 0L2 2.6L4 0Z" fill="#c0c0c0"/></svg><div style="left:107.40px;top:425.60px;width:1.00px;height:89.40px;background:#222;"></div><div style="left:0.00px;top:505.66px;width:101.60px;height:10.49px;background:#4d4d4d;"></div><svg style="left:14.00px;top:426.40px;" width="40.00" height="2.00" viewBox="0 0 40 2"><path d="M1 .8H6M14 .8H20M24 .8H38" stroke="#8a8a8a" stroke-width=".8" stroke-dasharray="3 1.4"/></svg><svg style="left:21.20px;top:430.60px;" width="7.00" height="5.80" viewBox="0 0 7 5.8"><path d="M.2 .4H2.6L3.3 1.2H6.6V5.5H.2Z" fill="#d0d0d0"/></svg><div class="t" style="left:29.80px;top:429.00px;color:#c8c8c8;font-size:6.9px;font-weight:400;">DELTA_eye+make+bc</div><svg style="left:14.40px;top:439.69px;" width="3.20" height="4.60" viewBox="0 0 3.2 4.6"><path d="M0 0L3 2.3L0 4.6Z" fill="#8e8e8e"/></svg><svg style="left:21.20px;top:439.09px;" width="7.00" height="5.80" viewBox="0 0 7 5.8"><path d="M.2 .4H2.6L3.3 1.2H6.6V5.5H.2Z" fill="#d0d0d0"/></svg><div class="t" style="left:29.80px;top:437.49px;color:#c8c8c8;font-size:6.9px;font-weight:400;">memory pendant</div><svg style="left:13.60px;top:448.98px;" width="4.40" height="3.20" viewBox="0 0 4.4 3.2"><path d="M0 0H4.4L2.2 3Z" fill="#8e8e8e"/></svg><svg style="left:21.20px;top:447.58px;" width="7.40" height="5.80" viewBox="0 0 7.4 5.8"><path d="M.2 .4H2.6L3.2 1.2H6V2H1.6L.2 5.4Z" fill="#d0d0d0"/><path d="M1.9 2.4H7.3L5.9 5.5H.4Z" fill="#d0d0d0"/></svg><div class="t cj" style="left:29.80px;top:446.29px;color:#c8c8c8;font-size:6.45px;font-weight:400;letter-spacing:-1.15px;">セーター</div><svg style="left:21.60px;top:457.47px;" width="4.40" height="3.20" viewBox="0 0 4.4 3.2"><path d="M0 0H4.4L2.2 3Z" fill="#8e8e8e"/></svg><svg style="left:29.20px;top:456.07px;" width="7.40" height="5.80" viewBox="0 0 7.4 5.8"><path d="M.2 .4H2.6L3.2 1.2H6V2H1.6L.2 5.4Z" fill="#d0d0d0"/><path d="M1.9 2.4H7.3L5.9 5.5H.4Z" fill="#d0d0d0"/></svg><div class="t" style="left:37.80px;top:454.47px;color:#c8c8c8;font-size:6.9px;font-weight:400;">TX</div><svg style="left:35.80px;top:464.56px;" width="7.00" height="5.80" viewBox="0 0 7 5.8"><path d="M.2 .4H2.6L3.3 1.2H6.6V5.5H.2Z" fill="#d0d0d0"/></svg><div class="t" style="left:44.40px;top:462.96px;color:#c8c8c8;font-size:6.9px;font-weight:400;">MA</div><svg style="left:35.80px;top:473.05px;" width="7.00" height="5.80" viewBox="0 0 7 5.8"><path d="M.2 .4H2.6L3.3 1.2H6.6V5.5H.2Z" fill="#d0d0d0"/></svg><div class="t" style="left:44.40px;top:471.45px;color:#c8c8c8;font-size:6.9px;font-weight:400;">TXR</div><svg style="left:13.60px;top:482.94px;" width="4.40" height="3.20" viewBox="0 0 4.4 3.2"><path d="M0 0H4.4L2.2 3Z" fill="#8e8e8e"/></svg><svg style="left:21.20px;top:481.54px;" width="7.40" height="5.80" viewBox="0 0 7.4 5.8"><path d="M.2 .4H2.6L3.2 1.2H6V2H1.6L.2 5.4Z" fill="#d0d0d0"/><path d="M1.9 2.4H7.3L5.9 5.5H.4Z" fill="#d0d0d0"/></svg><div class="t cj" style="left:29.80px;top:480.25px;color:#c8c8c8;font-size:6.45px;font-weight:400;">冬服</div><svg style="left:29.20px;top:490.03px;" width="7.00" height="5.80" viewBox="0 0 7 5.8"><path d="M.2 .4H2.6L3.3 1.2H6.6V5.5H.2Z" fill="#d0d0d0"/></svg><div class="t" style="left:37.80px;top:488.43px;color:#c8c8c8;font-size:6.9px;font-weight:400;">MA</div><svg style="left:21.20px;top:498.52px;" width="7.00" height="5.80" viewBox="0 0 7 5.8"><path d="M.2 .4H2.6L3.3 1.2H6.6V5.5H.2Z" fill="#d0d0d0"/></svg><div class="t cj" style="left:29.80px;top:497.23px;color:#c8c8c8;font-size:6.45px;font-weight:400;">複眼器</div><svg style="left:13.60px;top:508.41px;" width="4.40" height="3.20" viewBox="0 0 4.4 3.2"><path d="M0 0H4.4L2.2 3Z" fill="#8e8e8e"/></svg><svg style="left:21.20px;top:507.01px;" width="7.40" height="5.80" viewBox="0 0 7.4 5.8"><path d="M.2 .4H2.6L3.2 1.2H6V2H1.6L.2 5.4Z" fill="#d0d0d0"/><path d="M1.9 2.4H7.3L5.9 5.5H.4Z" fill="#d0d0d0"/></svg><div class="t cj" style="left:29.80px;top:505.72px;color:#c8c8c8;font-size:6.45px;font-weight:400;letter-spacing:-0.3px;">海月の雫</div><div style="left:108.40px;top:425.60px;width:607.80px;height:11.60px;background:#3c3c3c;"></div><div style="left:108.40px;top:437.20px;width:607.80px;height:68.20px;background:#333333;"></div><div style="left:108.40px;top:505.40px;width:607.80px;height:9.60px;background:#3c3c3c;"></div><div class="t" style="left:110.60px;top:426.80px;color:#c8c8c8;font-size:6.9px;font-weight:400;">Assets</div><svg style="left:134.40px;top:429.00px;" width="3.40" height="4.80" viewBox="0 0 3.4 4.8"><path d="M.4 .4L2.8 2.4L.4 4.4" fill="none" stroke="#8e8e8e" stroke-width=".8"/></svg><div class="t cj" style="left:141.20px;top:427.11px;color:#c8c8c8;font-size:6.45px;font-weight:400;letter-spacing:-0.5px;">ゆの工房</div><svg style="left:167.60px;top:429.00px;" width="3.40" height="4.80" viewBox="0 0 3.4 4.8"><path d="M.4 .4L2.8 2.4L.4 4.4" fill="none" stroke="#8e8e8e" stroke-width=".8"/></svg><div class="t cj" style="left:174.60px;top:427.16px;color:#e8e8e8;font-size:6.5px;font-weight:700;letter-spacing:-0.3px;">海月の雫</div><svg style="left:120.60px;top:449.20px;" width="26.40" height="21.80" viewBox="0 0 26.4 21.8"><path d="M2 0H9.6Q10.6 0 11.2 .9L12.4 3H24.4Q26.4 3 26.4 5V19.8Q26.4 21.8 24.4 21.8H2Q0 21.8 0 19.8V2Q0 0 2 0Z" fill="#c6c6c6"/></svg><svg style="left:161.50px;top:449.20px;" width="26.40" height="21.80" viewBox="0 0 26.4 21.8"><path d="M2 0H9.6Q10.6 0 11.2 .9L12.4 3H24.4Q26.4 3 26.4 5V19.8Q26.4 21.8 24.4 21.8H2Q0 21.8 0 19.8V2Q0 0 2 0Z" fill="#c6c6c6"/></svg><svg style="left:202.30px;top:449.20px;" width="26.40" height="21.80" viewBox="0 0 26.4 21.8"><path d="M2 0H9.6Q10.6 0 11.2 .9L12.4 3H24.4Q26.4 3 26.4 5V19.8Q26.4 21.8 24.4 21.8H2Q0 21.8 0 19.8V2Q0 0 2 0Z" fill="#c6c6c6"/></svg><svg style="left:240.00px;top:444.40px;" width="30.00" height="32.00" viewBox="0 0 30 32"><path d="M15 .8L28.8 8V24L15 31.2L1.2 24V8Z" fill="#7fd3f7"/><path d="M15 .8L28.8 8L15 15.2L1.2 8Z" fill="#8edaf9"/><path d="M15 .8L28.8 8V24L15 31.2L1.2 24V8ZM1.2 8L15 15.2L28.8 8M15 15.2V31.2" fill="none" stroke="#23333d" stroke-width="1.7" stroke-linejoin="round"/></svg><div style="left:281.20px;top:444.00px;width:31.60px;height:32.20px;background:#515151;"></div><svg style="left:281.20px;top:444.00px;" width="31.60" height="32.20" viewBox="0 0 31.6 32.2"><defs><filter id="jb"><feGaussianBlur stdDeviation=".35"/></filter></defs><g filter="url(#jb)"><path d="M9.4 12Q9.6 6.4 15.8 6.4Q22 6.4 22.2 12Q15.8 13.6 9.4 12Z" fill="#8fa0e0"/><path d="M9.4 12Q15.8 10 22.2 12Q15.8 14.4 9.4 12Z" fill="#c4d4f6"/><path d="M11 13V19M13.4 13.4V22M15.6 13.6V21M18 13.4V23M20.4 13V19.4" stroke="#8f9fdc" stroke-width=".7"/></g></svg><svg style="left:309.40px;top:456.20px;" width="8.80" height="8.80" viewBox="0 0 8.8 8.8"><circle cx="4.4" cy="4.4" r="4.2" fill="#ececec"/><path d="M3.2 2.2L6.6 4.4L3.2 6.6Z" fill="#333"/></svg><div class="t" style="left:132.80px;top:477.70px;color:#adadad;font-size:6.0px;font-weight:400;transform:translateX(-50%);">FX</div><div class="t" style="left:173.80px;top:477.70px;color:#adadad;font-size:6.0px;font-weight:400;transform:translateX(-50%);">MA</div><div class="t" style="left:214.20px;top:477.70px;color:#adadad;font-size:6.0px;font-weight:400;transform:translateX(-50%);">TX</div><div class="t" style="left:240.20px;top:477.70px;color:#adadad;font-size:6.1px;font-weight:400;">Jellyfish D···</div><svg style="left:283.60px;top:479.20px;" width="6.00" height="6.00" viewBox="0 0 6 6"><circle cx="3" cy="3" r="2.9" fill="#6fc3ee"/><path d="M1.5 1.8H4.5L3.4 3.4V4.8H2.6V3.4Z" fill="#f0f8ff"/></svg><div class="t cj" style="left:291.40px;top:478.00px;color:#d4d4d4;font-size:5.6px;font-weight:400;letter-spacing:-0.25px;">海月の雫</div><div style="left:678.40px;top:510.60px;width:29.00px;height:0.80px;background:#6a6a6a;"></div><svg style="left:692.60px;top:508.20px;" width="5.60" height="5.60" viewBox="0 0 5.6 5.6"><circle cx="2.8" cy="2.8" r="2.5" fill="#a8a8a8"/></svg></div></body></html>
